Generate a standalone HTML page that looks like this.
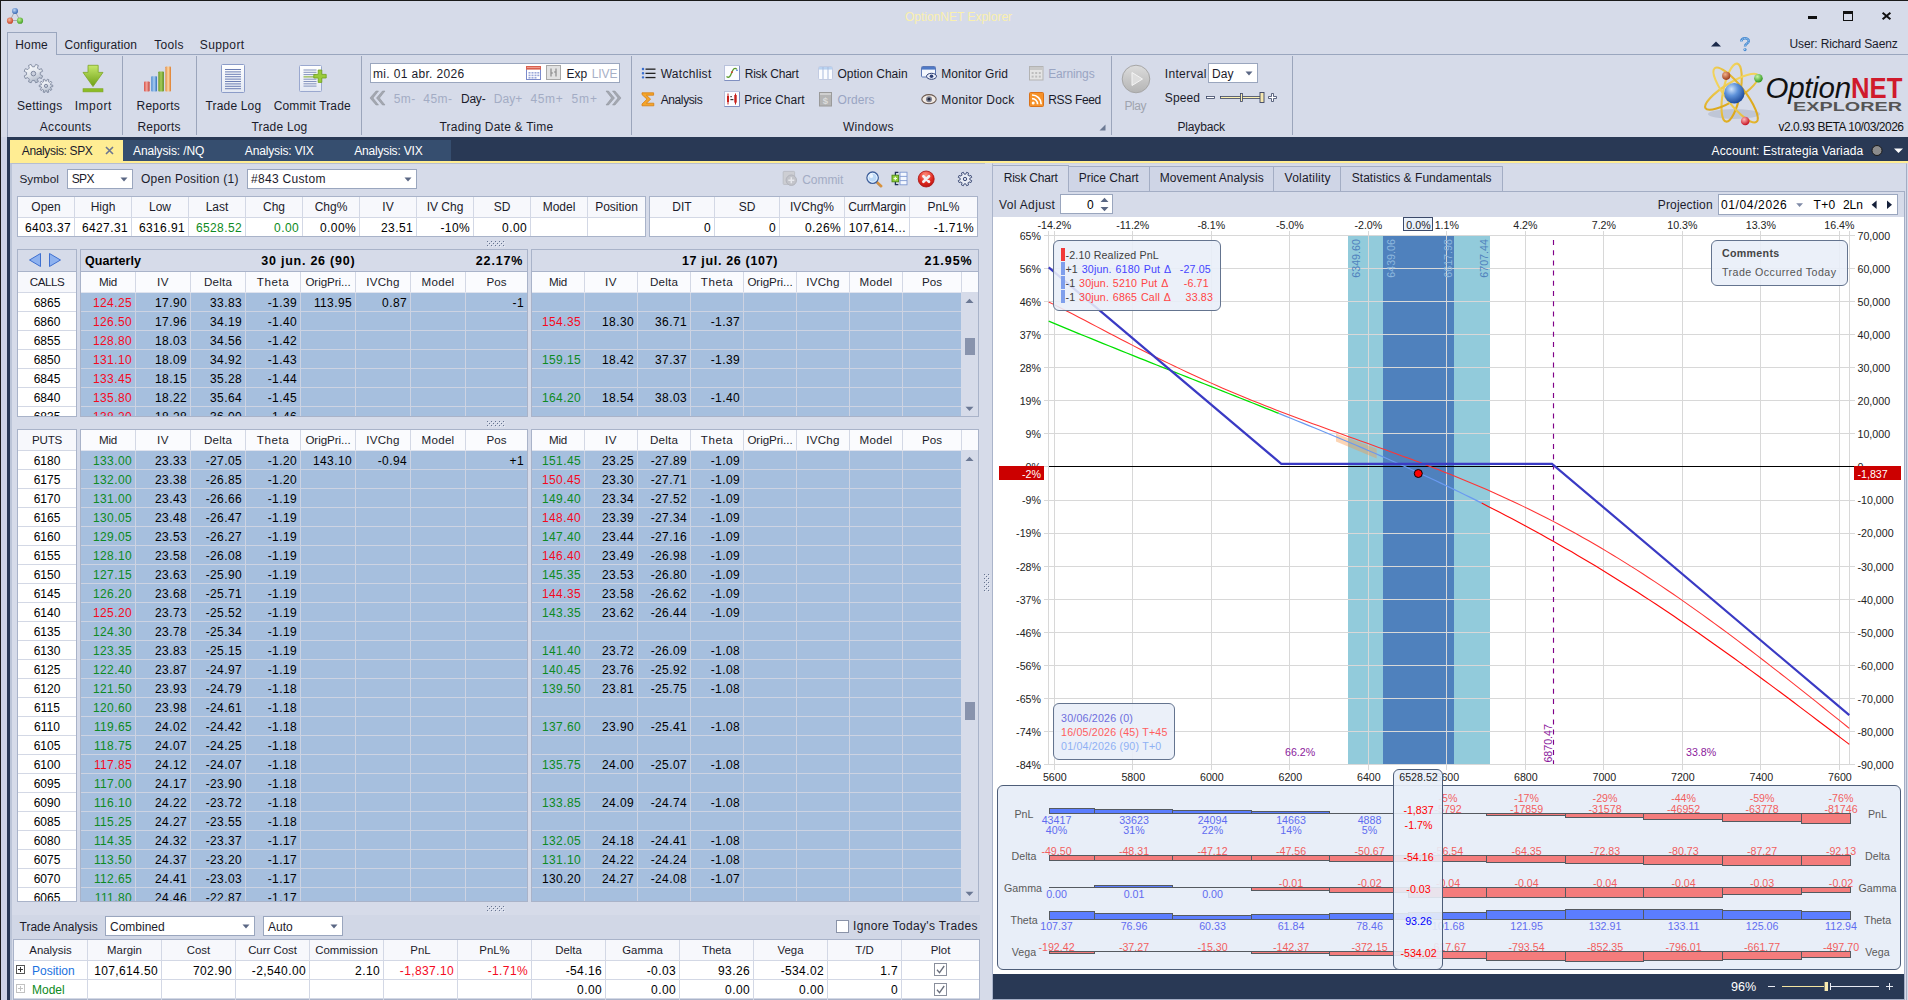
<!DOCTYPE html>
<html><head><meta charset="utf-8"><title>OptionNET Explorer</title>
<style>
html,body{margin:0;padding:0;overflow:hidden;}
body{width:1908px;height:1000px;overflow:hidden;position:relative;background:#d6dbe9;font-family:"Liberation Sans",sans-serif;font-size:12px;color:#1b1b2b;}
div{position:absolute;box-sizing:border-box;}
.t{white-space:nowrap;}
.n{white-space:nowrap;font-size:12px;letter-spacing:0.38px;color:#000;}
.c{white-space:nowrap;font-size:10.67px;}
svg{position:absolute;overflow:visible;}
.hd{background:#f7f8fc;}
.g{color:#0d8a22;}
.r{color:#f40a1e;}
</style></head><body>

<div style="left:0px;top:0px;width:1908px;height:1px;background:#1a1a1a;"></div>
<div style="left:0px;top:0px;width:1px;height:1000px;background:#1a1a1a;"></div>
<div style="left:1px;top:137px;width:6px;height:863px;background:#ced4e6;"></div>
<svg style="left:6px;top:7px" width="18" height="18" viewBox="0 0 18 18">
<defs>
<radialGradient id="gb" cx="40%" cy="35%" r="70%"><stop offset="0" stop-color="#bcd6f5"/><stop offset="1" stop-color="#2c5fb0"/></radialGradient>
<radialGradient id="gr" cx="40%" cy="35%" r="70%"><stop offset="0" stop-color="#f6b59a"/><stop offset="1" stop-color="#c4381a"/></radialGradient>
<radialGradient id="gg" cx="40%" cy="35%" r="70%"><stop offset="0" stop-color="#b9ee8e"/><stop offset="1" stop-color="#3c9a1c"/></radialGradient>
</defs>
<path d="M9 4 L4 13.5 L14 13.5 Z" fill="none" stroke="#8f8f96" stroke-width="0.7"/>
<circle cx="9" cy="4" r="3" fill="url(#gb)"/><circle cx="4" cy="13.7" r="3.1" fill="url(#gr)"/><circle cx="14" cy="13.7" r="3.1" fill="url(#gg)"/></svg>
<div class="t" style="left:858.5px;width:200px;text-align:center;top:9.0px;line-height:16px;height:16px;color:#faf0ae;font-size:12px;">OptionNET Explorer</div>
<div style="left:1808px;top:16px;width:9px;height:3px;background:#111;"></div>
<div style="left:1843px;top:11px;width:10px;height:10px;border:1px solid #111;border-top:3px solid #111;"></div>
<svg style="left:1881px;top:11px" width="11" height="10"><path d="M1.6 1.7 L9.4 8.3 M9.4 1.7 L1.6 8.3" stroke="#111" stroke-width="2"/></svg>
<div style="left:7px;top:32px;width:50px;height:23px;border:1px solid #9aa6be;border-bottom:none;background:#d6dbe9;z-index:2;"></div>
<div style="left:7px;top:54px;width:1901px;height:1px;background:#9aa6be;"></div>
<div style="left:8px;top:54px;width:48px;height:1px;background:#d6dbe9;z-index:3;"></div>
<div class="t" style="left:15.3px;top:36.5px;line-height:16px;height:16px;font-size:12px;letter-spacing:0.12px;z-index:4;">Home</div>
<div class="t" style="left:64.5px;top:36.5px;line-height:16px;height:16px;font-size:12px;letter-spacing:0.09px;">Configuration</div>
<div class="t" style="left:154.2px;top:36.5px;line-height:16px;height:16px;font-size:12px;letter-spacing:0.30px;">Tools</div>
<div class="t" style="left:199.8px;top:36.5px;line-height:16px;height:16px;font-size:12px;letter-spacing:0.38px;">Support</div>
<svg style="left:1711px;top:41px" width="10" height="6"><path d="M0 5.5 L5 0.5 L10 5.5 Z" fill="#1b2a4a"/></svg>
<svg style="left:1739px;top:37px" width="12" height="15" viewBox="0 0 12 15"><path d="M2.3 4.4 C2.3 0.4 9.8 0.4 9.8 4 C9.8 6.6 6 6.4 6 9.4" fill="none" stroke="#4a8bd0" stroke-width="2.5"/><path d="M2.3 4.4 C2.3 0.4 9.8 0.4 9.8 4 C9.8 6.6 6 6.4 6 9.4" fill="none" stroke="#a9d2f5" stroke-width="1" stroke-dasharray="1.2 1"/><circle cx="6" cy="12.6" r="1.6" fill="#4a8bd0"/><circle cx="5.7" cy="12.2" r="0.7" fill="#b9dcf8"/></svg>
<div class="t" style="left:1789.5px;top:35.6px;line-height:16px;height:16px;font-size:12px;letter-spacing:-0.14px;">User: Richard Saenz</div>
<div style="left:7px;top:55px;width:1px;height:82px;background:#9aa6be;"></div>
<div style="left:122px;top:56px;width:1px;height:79px;background:#9ba5bb;"></div>
<div style="left:196px;top:56px;width:1px;height:79px;background:#9ba5bb;"></div>
<div style="left:361px;top:56px;width:1px;height:79px;background:#9ba5bb;"></div>
<div style="left:631px;top:56px;width:1px;height:79px;background:#9ba5bb;"></div>
<div style="left:1111px;top:56px;width:1px;height:79px;background:#9ba5bb;"></div>
<div style="left:1292px;top:56px;width:1px;height:79px;background:#9ba5bb;"></div>
<div class="t" style="left:39.8px;top:119.0px;line-height:16px;height:16px;font-size:12px;letter-spacing:0.29px;">Accounts</div>
<div class="t" style="left:137.5px;top:119.0px;line-height:16px;height:16px;font-size:12px;letter-spacing:0.17px;">Reports</div>
<div class="t" style="left:251.5px;top:119.0px;line-height:16px;height:16px;font-size:12px;letter-spacing:0.19px;">Trade Log</div>
<div class="t" style="left:439.5px;top:119.0px;line-height:16px;height:16px;font-size:12px;letter-spacing:0.22px;">Trading Date &amp; Time</div>
<div class="t" style="left:842.9px;top:119.0px;line-height:16px;height:16px;font-size:12px;letter-spacing:0.32px;">Windows</div>
<div class="t" style="left:1177.5px;top:119.0px;line-height:16px;height:16px;font-size:12px;letter-spacing:-0.16px;">Playback</div>
<div class="t" style="left:16.9px;top:98.0px;line-height:16px;height:16px;font-size:12px;letter-spacing:0.28px;">Settings</div>
<div class="t" style="left:74.7px;top:98.0px;line-height:16px;height:16px;font-size:12px;letter-spacing:0.53px;">Import</div>
<div class="t" style="left:136.5px;top:98.0px;line-height:16px;height:16px;font-size:12px;letter-spacing:0.21px;">Reports</div>
<div class="t" style="left:205.5px;top:98.0px;line-height:16px;height:16px;font-size:12px;letter-spacing:0.17px;">Trade Log</div>
<div class="t" style="left:273.7px;top:98.0px;line-height:16px;height:16px;font-size:12px;letter-spacing:0.15px;">Commit Trade</div>
<svg style="left:0;top:0" width="130" height="100"><defs><linearGradient id="gm" x1="0" y1="0" x2="0.4" y2="1"><stop offset="0" stop-color="#ffffff"/><stop offset="0.55" stop-color="#e4e8ef"/><stop offset="1" stop-color="#b4bdcc"/></linearGradient></defs><polygon points="40.22,74.68 42.62,75.89 41.54,78.50 38.98,77.66 37.46,79.18 38.30,81.74 35.69,82.82 34.48,80.42 32.32,80.42 31.11,82.82 28.50,81.74 29.34,79.18 27.82,77.66 25.26,78.50 24.18,75.89 26.58,74.68 26.58,72.52 24.18,71.31 25.26,68.70 27.82,69.54 29.34,68.02 28.50,65.46 31.11,64.38 32.32,66.78 34.48,66.78 35.69,64.38 38.30,65.46 37.46,68.02 38.98,69.54 41.54,68.70 42.62,71.31 40.22,72.52" fill="url(#gm)" stroke="#7e889e" stroke-width="0.9" stroke-linejoin="round"/><circle cx="33.4" cy="73.6" r="2.3" fill="#c9cfdd" stroke="#7e889e" stroke-width="1"/><polygon points="50.81,84.98 52.75,85.09 52.75,86.71 50.81,86.82 50.43,87.99 51.94,89.21 50.99,90.52 49.35,89.47 48.36,90.19 48.86,92.07 47.32,92.57 46.61,90.76 45.39,90.76 44.68,92.57 43.14,92.07 43.64,90.19 42.65,89.47 41.01,90.52 40.06,89.21 41.57,87.99 41.19,86.82 39.25,86.71 39.25,85.09 41.19,84.98 41.57,83.81 40.06,82.59 41.01,81.28 42.65,82.33 43.64,81.61 43.14,79.73 44.68,79.23 45.39,81.04 46.61,81.04 47.32,79.23 48.86,79.73 48.36,81.61 49.35,82.33 50.99,81.28 51.94,82.59 50.43,83.81" fill="url(#gm)" stroke="#7e889e" stroke-width="0.9" stroke-linejoin="round"/><circle cx="46" cy="85.9" r="1.6" fill="#c9cfdd" stroke="#7e889e" stroke-width="1"/></svg>
<svg style="left:80px;top:62px" width="26" height="32" viewBox="0 0 26 32"><defs><linearGradient id="gi" x1="0" y1="0" x2="0" y2="1"><stop offset="0" stop-color="#c6e86b"/><stop offset="1" stop-color="#6c9f14"/></linearGradient></defs>
<path d="M8 3.3 H18.2 V10.4 H23 L13 24.6 L3 10.4 H8 Z" fill="url(#gi)" stroke="#7ea626" stroke-width="0.8"/>
<rect x="3" y="26.7" width="20" height="3.2" fill="#8cbc24" stroke="#7ea626" stroke-width="0.6"/></svg>
<svg style="left:142px;top:64px" width="32" height="30" viewBox="0 0 32 30">
<defs>
<linearGradient id="r1" x1="0" x2="1"><stop offset="0" stop-color="#d9534a"/><stop offset=".5" stop-color="#f3a59c"/><stop offset="1" stop-color="#c23a30"/></linearGradient>
<linearGradient id="r2" x1="0" x2="1"><stop offset="0" stop-color="#4a88d0"/><stop offset=".5" stop-color="#a9cdf2"/><stop offset="1" stop-color="#3270bd"/></linearGradient>
<linearGradient id="r3" x1="0" x2="1"><stop offset="0" stop-color="#6c9a28"/><stop offset=".5" stop-color="#a6cc5c"/><stop offset="1" stop-color="#5a8a1c"/></linearGradient>
<linearGradient id="r4" x1="0" x2="1"><stop offset="0" stop-color="#e58a3a"/><stop offset=".5" stop-color="#fbd7a8"/><stop offset="1" stop-color="#dd7a28"/></linearGradient>
</defs>
<rect x="2" y="17.4" width="5.6" height="10.2" rx="0.8" fill="url(#r1)"/>
<rect x="9.2" y="12.3" width="5.8" height="15.3" rx="0.8" fill="url(#r2)"/>
<rect x="16.3" y="7.4" width="5.6" height="20.2" rx="0.8" fill="url(#r3)"/>
<rect x="23.4" y="2.4" width="5.6" height="25.2" rx="0.8" fill="url(#r4)"/></svg>
<svg style="left:221px;top:64px" width="24" height="29" viewBox="0 0 24 29"><defs><linearGradient id="gd" x1="0" y1="0" x2="0" y2="1"><stop offset="0" stop-color="#ffffff"/><stop offset="1" stop-color="#e3e8f3"/></linearGradient></defs>
<rect x="0.5" y="0.5" width="23" height="28" rx="1" fill="url(#gd)" stroke="#8c9cc8"/><rect x="4" y="5.0" width="16" height="1" fill="#6b7db3"/><rect x="4" y="7.4" width="16" height="1" fill="#6b7db3"/><rect x="4" y="9.8" width="16" height="1" fill="#6b7db3"/><rect x="4" y="12.2" width="16" height="1" fill="#6b7db3"/><rect x="4" y="14.6" width="16" height="1" fill="#6b7db3"/><rect x="4" y="17.0" width="16" height="1" fill="#6b7db3"/><rect x="4" y="19.4" width="16" height="1" fill="#6b7db3"/><rect x="4" y="21.8" width="16" height="1" fill="#6b7db3"/><rect x="4" y="24.2" width="16" height="1" fill="#6b7db3"/></svg>
<svg style="left:299px;top:65px" width="30" height="28" viewBox="0 0 30 28">
<rect x="0.5" y="0.5" width="22" height="26" rx="1" fill="url(#gd)" stroke="#9aa8cf"/><rect x="4.5" y="4.5" width="13" height="1" fill="#8493bd"/><rect x="4.5" y="6.8" width="13" height="1" fill="#8493bd"/><rect x="4.5" y="9.1" width="13" height="1" fill="#8493bd"/><rect x="4.5" y="11.4" width="13" height="1" fill="#7aa822"/><rect x="4.5" y="13.7" width="13" height="1" fill="#8493bd"/><rect x="4.5" y="16.0" width="13" height="1" fill="#8493bd"/><rect x="4.5" y="18.3" width="13" height="1" fill="#8493bd"/><rect x="4.5" y="20.6" width="13" height="1" fill="#8493bd"/>
<path d="M19.2 5 h3.6 v4.4 h4.4 v3.6 h-4.4 v4.4 h-3.6 v-4.4 h-4.4 v-3.6 h4.4 Z" fill="#9acb3a" stroke="#6e9f1b" stroke-width="0.8"/></svg>
<div style="left:370px;top:63px;width:250px;height:20px;background:#fff;border:1px solid #9aa6be;"></div>
<div class="t" style="left:373.0px;top:66.0px;line-height:16px;height:16px;font-size:12px;letter-spacing:0.34px;">mi. 01 abr. 2026</div>
<svg style="left:526px;top:65px" width="16" height="16"><rect x="0.5" y="1.5" width="14" height="13" fill="#fff" stroke="#7b8acb"/><rect x="0" y="1" width="15" height="3.6" fill="#d9604e"/><rect x="1" y="2" width="13" height="1" fill="#ee9a8c"/>
<g fill="#9aa7d9"><rect x="2.5" y="7" width="2" height="1.6"/><rect x="5.5" y="7" width="2" height="1.6"/><rect x="8.5" y="7" width="2" height="1.6"/><rect x="11.3" y="7" width="2" height="1.6"/><rect x="2.5" y="9.6" width="2" height="1.6"/><rect x="5.5" y="9.6" width="2" height="1.6"/><rect x="8.5" y="9.6" width="2" height="1.6"/><rect x="11.3" y="9.6" width="2" height="1.6"/><rect x="2.5" y="12" width="2" height="1.6"/><rect x="5.5" y="12" width="2" height="1.6"/><rect x="8.5" y="12" width="2" height="1.6"/></g></svg>
<svg style="left:546px;top:65px" width="16" height="16"><rect x="0.5" y="0.5" width="14" height="14" fill="#e2e2e2" stroke="#a8a8a8"/><path d="M5 3.5 V11.5 M10 3.5 V11.5 M5 8 H7 M8 7 H10" stroke="#8a8a8a" stroke-width="1.2" fill="none"/></svg>
<div class="t" style="left:566.5px;top:66.0px;line-height:16px;height:16px;font-size:12px;letter-spacing:-0.03px;">Exp</div>
<div class="t" style="left:591.8px;top:66.0px;line-height:16px;height:16px;font-size:12px;letter-spacing:-0.13px;color:#a7b0c6;">LIVE</div>
<svg style="left:368px;top:90px" width="18" height="16"><path d="M8 1 L2 8 L8 15 L10.5 15 L5 8 L10.5 1 Z M14.5 1 L8.5 8 L14.5 15 L17 15 L11.5 8 L17 1 Z" fill="#a3a7b0" stroke="#8d9198" stroke-width="0.5"/></svg>
<svg style="left:605px;top:90px" width="18" height="16"><path d="M8 1 L2 8 L8 15 L10.5 15 L5 8 L10.5 1 Z M14.5 1 L8.5 8 L14.5 15 L17 15 L11.5 8 L17 1 Z" transform="translate(18,0) scale(-1,1)" fill="#a3a7b0" stroke="#8d9198" stroke-width="0.5"/></svg>
<div class="t" style="left:393.8px;top:91.0px;line-height:16px;height:16px;font-size:12px;letter-spacing:0.35px;color:#a3acc4;">5m-</div>
<div class="t" style="left:423.3px;top:91.0px;line-height:16px;height:16px;font-size:12px;letter-spacing:0.47px;color:#a3acc4;">45m-</div>
<div class="t" style="left:460.9px;top:91.0px;line-height:16px;height:16px;font-size:12px;letter-spacing:-0.18px;color:#1b1b2b;">Day-</div>
<div class="t" style="left:493.8px;top:91.0px;line-height:16px;height:16px;font-size:12px;letter-spacing:0.04px;color:#a3acc4;">Day+</div>
<div class="t" style="left:530.4px;top:91.0px;line-height:16px;height:16px;font-size:12px;letter-spacing:0.69px;color:#a3acc4;">45m+</div>
<div class="t" style="left:571.5px;top:91.0px;line-height:16px;height:16px;font-size:12px;letter-spacing:0.87px;color:#a3acc4;">5m+</div>
<div class="t" style="left:660.7px;top:65.5px;line-height:16px;height:16px;font-size:12px;letter-spacing:0.29px;color:#1b1b2b;">Watchlist</div>
<div class="t" style="left:660.7px;top:91.5px;line-height:16px;height:16px;font-size:12px;letter-spacing:-0.39px;color:#1b1b2b;">Analysis</div>
<div class="t" style="left:744.7px;top:65.5px;line-height:16px;height:16px;font-size:12px;letter-spacing:-0.22px;color:#1b1b2b;">Risk Chart</div>
<div class="t" style="left:744.2px;top:91.5px;line-height:16px;height:16px;font-size:12px;letter-spacing:0.04px;color:#1b1b2b;">Price Chart</div>
<div class="t" style="left:837.5px;top:65.5px;line-height:16px;height:16px;font-size:12px;letter-spacing:0.01px;color:#1b1b2b;">Option Chain</div>
<div class="t" style="left:837.5px;top:91.5px;line-height:16px;height:16px;font-size:12px;letter-spacing:0.05px;color:#9aa5c3;">Orders</div>
<div class="t" style="left:941.3px;top:65.5px;line-height:16px;height:16px;font-size:12px;letter-spacing:0.05px;color:#1b1b2b;">Monitor Grid</div>
<div class="t" style="left:941.3px;top:91.5px;line-height:16px;height:16px;font-size:12px;letter-spacing:0.21px;color:#1b1b2b;">Monitor Dock</div>
<div class="t" style="left:1048.2px;top:65.5px;line-height:16px;height:16px;font-size:12px;letter-spacing:-0.13px;color:#9aa5c3;">Earnings</div>
<div class="t" style="left:1048.2px;top:91.5px;line-height:16px;height:16px;font-size:12px;letter-spacing:-0.33px;color:#1b1b2b;">RSS Feed</div>
<svg style="left:641px;top:67px" width="16" height="13"><g fill="#222"><rect x="4.5" y="1.5" width="10" height="1.3"/><rect x="4.5" y="5.7" width="10" height="1.3"/><rect x="4.5" y="9.9" width="10" height="1.3"/></g><g fill="#3b6fd0"><rect x="0.8" y="0.8" width="2.4" height="2.4" rx="1"/><rect x="0.8" y="5" width="2.4" height="2.4" rx="1"/><rect x="0.8" y="9.2" width="2.4" height="2.4" rx="1"/></g></svg>
<svg style="left:641px;top:92px" width="15" height="15"><path d="M1 0.8 H12.6 V3.2 H5.4 L9.6 7.2 L5.4 11.2 H12.8 V13.8 H1 V12 L6 7.2 L1 2.6 Z" fill="#f5a52a" stroke="#d57e12" stroke-width="0.8" stroke-linejoin="round"/></svg>
<svg style="left:724px;top:65px" width="17" height="17"><rect x="0.5" y="0.5" width="15" height="15" fill="#fbfcff" stroke="#b9c2dc"/><path d="M0.5 15.5 H15.5 V1" stroke="#7f8fc0" fill="none"/><path d="M2.5 11.5 C5 13.5 6.3 11.5 7.6 8" stroke="#5a9a2a" stroke-width="1.3" fill="none"/><path d="M7.6 8 C9 3.6 10.8 2.2 12.8 4.2" stroke="#5a9a2a" stroke-width="1.3" fill="none"/><circle cx="7.9" cy="7.2" r="0.9" fill="#d33"/><circle cx="13" cy="5.2" r="0.8" fill="#36c"/></svg>
<svg style="left:724px;top:91px" width="17" height="17"><rect x="0.5" y="0.5" width="15" height="15" fill="#fbfcff" stroke="#b9c2dc"/><path d="M0.5 15.5 H15.5 V1" stroke="#7f8fc0" fill="none"/><g stroke="#c8201c" fill="#c8201c"><path d="M4 2.5 V13.5" stroke-width="1"/><rect x="3" y="5" width="2" height="6" stroke="none"/><path d="M11.5 2.5 V13.5" stroke-width="1"/><rect x="10.3" y="4" width="2.4" height="7.6" stroke="none"/></g><g fill="#333"><rect x="6.4" y="5" width="1.4" height="1.2"/><rect x="6.4" y="8" width="3" height="1.2"/></g></svg>
<svg style="left:818px;top:66px" width="16" height="15"><rect x="0.5" y="0.5" width="14" height="13" rx="1.2" fill="#fbfcff" stroke="#c2cbe2"/><rect x="1" y="1" width="13" height="2.6" fill="#b9d2f0"/><path d="M5 1 V13 M10 1 V13" stroke="#a9bbdd"/></svg>
<svg style="left:819px;top:92px" width="14" height="15"><rect x="0.5" y="0.5" width="12" height="13.5" fill="#b5b5b5" stroke="#9a9a9a"/><rect x="1" y="1" width="11" height="2" fill="#cfcfcf"/><text x="6.5" y="11.6" font-size="9.5" font-weight="bold" text-anchor="middle" fill="#dcdcdc" font-family="Liberation Sans">$</text></svg>
<svg style="left:921px;top:66px" width="17" height="15"><rect x="0.5" y="0.5" width="14" height="10.5" rx="1" fill="#f4f7fd" stroke="#5d78b5"/><rect x="1" y="1" width="13" height="2.6" fill="#4f79c6"/><ellipse cx="10.5" cy="10.3" rx="5" ry="3" fill="#e9eefa" stroke="#2e3f74" stroke-width="1"/><circle cx="10.5" cy="10.3" r="1.8" fill="#2e3f74"/></svg>
<svg style="left:921px;top:93px" width="17" height="13"><ellipse cx="8" cy="6.2" rx="7.2" ry="4.6" fill="#f1e9e2" stroke="#6b5a52" stroke-width="1.1"/><circle cx="8" cy="6.2" r="3" fill="#7a7f92"/><circle cx="8" cy="6.2" r="1.4" fill="#23273a"/></svg>
<svg style="left:1029px;top:66px" width="15" height="15"><rect x="0.5" y="0.5" width="13.5" height="13.5" fill="#e4e4e4" stroke="#b3b3b3"/><rect x="1" y="1" width="12.5" height="3" fill="#c8c8c8"/><g fill="#bdbdbd"><rect x="2.6" y="6" width="2" height="2"/><rect x="6.2" y="6" width="2" height="2"/><rect x="9.8" y="6" width="2" height="2"/><rect x="2.6" y="9.6" width="2" height="2"/><rect x="6.2" y="9.6" width="2" height="2"/><rect x="9.8" y="9.6" width="2" height="2"/></g></svg>
<svg style="left:1029px;top:92px" width="15" height="15"><rect x="0.5" y="0.5" width="14" height="14" rx="1" fill="#f6922a" stroke="#d9721a"/><circle cx="4.2" cy="11" r="1.5" fill="#fff"/><path d="M3 6.6 A5.6 5.6 0 0 1 8.6 12.2 M3 3 A9.2 9.2 0 0 1 12.2 12.2" stroke="#fff" stroke-width="1.7" fill="none"/></svg>
<svg style="left:1099px;top:124px" width="7" height="7"><path d="M6.5 0.5 V6.5 H0.5 Z" fill="#6d7a94"/></svg>
<svg style="left:1121px;top:64px" width="30" height="30"><defs><linearGradient id="gp" x1="0" y1="0" x2="0" y2="1"><stop offset="0" stop-color="#dcdcdc"/><stop offset="1" stop-color="#b4b4b4"/></linearGradient></defs><circle cx="15" cy="15" r="13.8" fill="url(#gp)" stroke="#a6a6a6"/><path d="M11 8.5 L21.5 15 L11 21.5 Z" fill="#dedede" stroke="#f4f4f4" stroke-width="1"/></svg>
<div class="t" style="left:1124.5px;top:98.0px;line-height:16px;height:16px;font-size:12px;letter-spacing:-0.44px;color:#a0a4ae;">Play</div>
<div class="t" style="left:1164.8px;top:65.5px;line-height:16px;height:16px;font-size:12px;letter-spacing:0.32px;">Interval</div>
<div style="left:1208px;top:63px;width:50px;height:20px;background:#fff;border:1px solid #9aa6be;"></div>
<div class="t" style="left:1212.1px;top:65.8px;line-height:16px;height:16px;font-size:12px;letter-spacing:0.02px;">Day</div>
<svg style="left:1245px;top:71px" width="8" height="5"><path d="M0.5 0.5 H7.5 L4 4.5 Z" fill="#5a6784"/></svg>
<div class="t" style="left:1164.8px;top:90.3px;line-height:16px;height:16px;font-size:12px;letter-spacing:0.10px;">Speed</div>
<svg style="left:1204px;top:91px" width="78" height="14"><rect x="2.5" y="5.5" width="8" height="2" fill="#fff" stroke="#3a4463" stroke-width="0.8"/><rect x="16.5" y="5.5" width="42" height="2" fill="#fbefb0" stroke="#3a4463" stroke-width="0.8"/><rect x="36.5" y="2.5" width="2" height="8" fill="#fbefb0" stroke="#3a4463" stroke-width="0.8"/><rect x="56" y="1.5" width="4" height="10" fill="#f6e7b0" stroke="#3a4463" stroke-width="0.9"/><path d="M69.5 2.5 v3 h3 v2 h-3 v3 h-2 v-3 h-3 v-2 h3 v-3 Z" fill="#fff" stroke="#3a4463" stroke-width="0.8"/></svg>
<svg style="left:1696px;top:56px" width="80" height="80" viewBox="0 0 80 80">
<defs><radialGradient id="lb" cx="36%" cy="30%" r="72%"><stop offset="0" stop-color="#cfe3fb"/><stop offset=".45" stop-color="#5f93da"/><stop offset="1" stop-color="#1d4a9a"/></radialGradient>
<radialGradient id="lr" cx="38%" cy="32%" r="70%"><stop offset="0" stop-color="#ffb8b8"/><stop offset="1" stop-color="#c40c1c"/></radialGradient>
<radialGradient id="lg" cx="38%" cy="32%" r="70%"><stop offset="0" stop-color="#c8f6a6"/><stop offset="1" stop-color="#2a961a"/></radialGradient>
<radialGradient id="lo" cx="38%" cy="32%" r="70%"><stop offset="0" stop-color="#f2b08a"/><stop offset="1" stop-color="#9c3a18"/></radialGradient>
<linearGradient id="ly" x1="0" y1="0" x2="1" y2="1"><stop offset="0" stop-color="#f6dc6a"/><stop offset="1" stop-color="#d8a010"/></linearGradient></defs>
<ellipse cx="38" cy="58" rx="26" ry="5" fill="#9aa3b8" opacity=".38"/>
<g fill="none" stroke="url(#ly)" stroke-width="2.1">
<ellipse cx="35.6" cy="36.6" rx="8.6" ry="29.5" transform="rotate(11 35.6 36.6)"/>
<ellipse cx="35.8" cy="35.8" rx="8.6" ry="31" transform="rotate(58 35.8 35.8)"/>
<ellipse cx="39.6" cy="39" rx="9.4" ry="34" transform="rotate(-38 39.6 39)"/>
</g>
<circle cx="38.3" cy="37.2" r="10.2" fill="url(#lb)"/>
<circle cx="30.2" cy="19.8" r="4.1" fill="url(#lo)"/>
<circle cx="62.4" cy="22.2" r="4.3" fill="url(#lg)"/>
<circle cx="49.2" cy="65" r="4.3" fill="url(#lr)"/>
</svg>
<div class="t" style="left:1765.5px;top:70.5px;line-height:34px;height:34px;font-size:29.5px;"><span style="font-style:italic;color:#111;letter-spacing:-0.25px">Option</span><span style="display:inline-block;position:relative;color:#d01a2c;font-weight:bold;transform:scaleX(0.87);transform-origin:0 50%;">NET</span></div>
<div class="t" style="left:1793.2px;top:100.3px;line-height:14px;height:14px;font-size:12.4px;font-weight:bold;color:#555;transform:scaleX(1.6);transform-origin:0 50%;">EXPLORER</div>
<div class="t" style="left:1778.5px;top:119.0px;line-height:16px;height:16px;font-size:12px;letter-spacing:-0.47px;color:#111;">v2.0.93 BETA 10/03/2026</div>
<div style="left:7px;top:137px;width:1901px;height:24px;background:#293955;"></div>
<div style="left:7px;top:161px;width:3px;height:839px;background:#293955;"></div>
<div style="left:10px;top:161px;width:1898px;height:2px;background:#ffed93;"></div>
<div style="left:10px;top:140px;width:113px;height:21px;background:#ffed93;"></div>
<div class="t" style="left:21.8px;top:142.5px;line-height:16px;height:16px;font-size:12px;letter-spacing:-0.36px;color:#1b1b2b;">Analysis: SPX</div>
<svg style="left:105px;top:146px" width="9" height="9"><path d="M1 1 L8 8 M8 1 L1 8" stroke="#6b7590" stroke-width="1.6"/></svg>
<div style="left:123px;top:140px;width:328px;height:21px;background:#364e6f;"></div>
<div class="t" style="left:133.0px;top:142.5px;line-height:16px;height:16px;font-size:12px;letter-spacing:-0.11px;color:#fff;">Analysis: /NQ</div>
<div class="t" style="left:244.8px;top:142.5px;line-height:16px;height:16px;font-size:12px;letter-spacing:-0.15px;color:#fff;">Analysis: VIX</div>
<div class="t" style="left:354.2px;top:142.5px;line-height:16px;height:16px;font-size:12px;letter-spacing:-0.18px;color:#fff;">Analysis: VIX</div>
<div class="t" style="left:1711.5px;top:142.5px;line-height:16px;height:16px;font-size:12px;letter-spacing:0.15px;color:#fff;">Account: Estrategia Variada</div>
<svg style="left:1871px;top:144px" width="12" height="12"><circle cx="6" cy="6.5" r="5" fill="#8c8c8c" stroke="#1c1c1c" stroke-width="1"/></svg>
<svg style="left:1894px;top:148px" width="9" height="6"><path d="M0 0.5 H9 L4.5 5 Z" fill="#fff"/></svg>
<div style="left:10px;top:163px;width:976px;height:837px;background:#d6dbe9;border-left:2px solid #bcc5d8;border-top:1px solid #b6bed1;"></div>
<div style="left:985px;top:163px;width:8px;height:837px;background:#d6dbe9;"></div>
<div class="t" style="left:19.5px;top:170.8px;line-height:16px;height:16px;font-size:11.8px;">Symbol</div>
<div style="left:67px;top:169px;width:66px;height:20px;background:#fff;border:1px solid #9aa6be;"></div>
<div class="t" style="left:71.8px;top:171.3px;line-height:16px;height:16px;font-size:12px;letter-spacing:-0.70px;">SPX</div>
<svg style="left:120px;top:177px" width="8" height="5"><path d="M0.5 0.5 H7.5 L4 4.5 Z" fill="#5a6784"/></svg>
<div class="t" style="left:141px;top:170.8px;line-height:16px;height:16px;font-size:12px;letter-spacing:0.25px;">Open Position (1)</div>
<div style="left:247px;top:169px;width:170px;height:20px;background:#fff;border:1px solid #9aa6be;"></div>
<div class="t" style="left:251px;top:171.3px;line-height:16px;height:16px;font-size:12px;letter-spacing:0.3px;">#843 Custom</div>
<svg style="left:404px;top:177px" width="8" height="5"><path d="M0.5 0.5 H7.5 L4 4.5 Z" fill="#5a6784"/></svg>
<svg style="left:782px;top:170px" width="18" height="18"><rect x="1.2" y="1.4" width="11.4" height="13" rx="0.8" fill="#cdced3" stroke="#bdbfc6"/><circle cx="9.3" cy="10.2" r="5.2" fill="#c3c4ca" stroke="#b2b4bc"/><path d="M9.3 7.2 v6 M6.3 10.2 h6" stroke="#e6e7ec" stroke-width="1.5"/></svg>
<div class="t" style="left:802.2px;top:171.6px;line-height:16px;height:16px;font-size:12px;letter-spacing:-0.04px;color:#a3acc4;">Commit</div>
<svg style="left:865px;top:170px" width="19" height="19"><path d="M12 12 L16.3 16.2" stroke="#d9923c" stroke-width="2.4" stroke-linecap="round"/><path d="M12 12 L16.3 16.2" stroke="#8a5a20" stroke-width="0.5" stroke-linecap="round" transform="translate(-0.9,0.9)"/><circle cx="7.6" cy="7.7" r="5.7" fill="#bcd9f7" stroke="#3f5f9a" stroke-width="1.3"/><circle cx="7.6" cy="7.7" r="4.4" fill="none" stroke="#e8f3ff" stroke-width="1"/><circle cx="6.2" cy="6" r="2" fill="#f2f8ff" opacity=".9"/></svg>
<svg style="left:891px;top:171px" width="18" height="16"><path d="M7.4 1.4 H4.4 V13.6 H7.4" stroke="#1f2d5a" stroke-width="1.3" fill="none"/><rect x="9" y="1.2" width="7" height="12.6" fill="#f4f8ff" stroke="#7f98d0" stroke-width="0.9"/><path d="M9 5.4 H16 M9 9.6 H16" stroke="#7f98d0" stroke-width="0.9"/><rect x="1" y="4.2" width="6.6" height="6.6" fill="#8ccb38" stroke="#4e8a14" stroke-width="0.9"/><path d="M4.3 5.8 v3.4 M2.6 7.5 h3.4" stroke="#f4ffe0" stroke-width="1.2"/></svg>
<svg style="left:917px;top:170px" width="19" height="19"><defs><radialGradient id="rx" cx="45%" cy="25%" r="80%"><stop offset="0" stop-color="#ff8f7e"/><stop offset=".6" stop-color="#e02a20"/><stop offset="1" stop-color="#b30f0f"/></radialGradient></defs><circle cx="9.2" cy="9" r="8" fill="url(#rx)" stroke="#a81414" stroke-width="0.8"/><path d="M6.4 6.2 L12 11.8 M12 6.2 L6.4 11.8" stroke="#f1f1f4" stroke-width="2.7" stroke-linecap="round"/></svg>
<svg style="left:956px;top:170px" width="18" height="18"><polygon points="13.84,9.77 15.71,10.61 14.88,12.61 12.96,11.88 11.88,12.96 12.61,14.88 10.61,15.71 9.77,13.84 8.23,13.84 7.39,15.71 5.39,14.88 6.12,12.96 5.04,11.88 3.12,12.61 2.29,10.61 4.16,9.77 4.16,8.23 2.29,7.39 3.12,5.39 5.04,6.12 6.12,5.04 5.39,3.12 7.39,2.29 8.23,4.16 9.77,4.16 10.61,2.29 12.61,3.12 11.88,5.04 12.96,6.12 14.88,5.39 15.71,7.39 13.84,8.23" fill="#e9edf5" stroke="#42507a" stroke-width="1" stroke-linejoin="round"/><circle cx="9" cy="9" r="1.7" fill="#d6dbe9" stroke="#42507a" stroke-width="1"/></svg>
<div style="left:17px;top:196px;width:629px;height:41px;background:#fff;border:1px solid #a9b3c9;"></div>
<div style="left:18px;top:197px;width:627px;height:20px;background:#f7f8fc;"></div>
<div style="left:18px;top:217px;width:627px;height:1px;background:#d3d8e5;"></div>
<div style="left:74px;top:197px;width:1px;height:39px;background:#d3d8e5;"></div>
<div style="left:131px;top:197px;width:1px;height:39px;background:#d3d8e5;"></div>
<div style="left:188px;top:197px;width:1px;height:39px;background:#d3d8e5;"></div>
<div style="left:245px;top:197px;width:1px;height:39px;background:#d3d8e5;"></div>
<div style="left:302px;top:197px;width:1px;height:39px;background:#d3d8e5;"></div>
<div style="left:359px;top:197px;width:1px;height:39px;background:#d3d8e5;"></div>
<div style="left:416px;top:197px;width:1px;height:39px;background:#d3d8e5;"></div>
<div style="left:473px;top:197px;width:1px;height:39px;background:#d3d8e5;"></div>
<div style="left:530px;top:197px;width:1px;height:39px;background:#d3d8e5;"></div>
<div style="left:587px;top:197px;width:1px;height:39px;background:#d3d8e5;"></div>
<div class="t" style="left:17.5px;width:57px;text-align:center;top:199.0px;line-height:16px;height:16px;font-size:12px;">Open</div>
<div class="t" style="left:74.5px;width:57px;text-align:center;top:199.0px;line-height:16px;height:16px;font-size:12px;">High</div>
<div class="t" style="left:131.5px;width:57px;text-align:center;top:199.0px;line-height:16px;height:16px;font-size:12px;">Low</div>
<div class="t" style="left:188.5px;width:57px;text-align:center;top:199.0px;line-height:16px;height:16px;font-size:12px;">Last</div>
<div class="t" style="left:245.5px;width:57px;text-align:center;top:199.0px;line-height:16px;height:16px;font-size:12px;">Chg</div>
<div class="t" style="left:302.5px;width:57px;text-align:center;top:199.0px;line-height:16px;height:16px;font-size:12px;">Chg%</div>
<div class="t" style="left:359.5px;width:57px;text-align:center;top:199.0px;line-height:16px;height:16px;font-size:12px;">IV</div>
<div class="t" style="left:416.5px;width:57px;text-align:center;top:199.0px;line-height:16px;height:16px;font-size:12px;">IV Chg</div>
<div class="t" style="left:473.5px;width:57px;text-align:center;top:199.0px;line-height:16px;height:16px;font-size:12px;">SD</div>
<div class="t" style="left:530.5px;width:57px;text-align:center;top:199.0px;line-height:16px;height:16px;font-size:12px;">Model</div>
<div class="t" style="left:587.5px;width:58px;text-align:center;top:199.0px;line-height:16px;height:16px;font-size:12px;">Position</div>
<div class="n " style="left:18px;width:53px;text-align:right;top:220.0px;line-height:16px;height:16px;">6403.37</div>
<div class="n " style="left:75px;width:53px;text-align:right;top:220.0px;line-height:16px;height:16px;">6427.31</div>
<div class="n " style="left:132px;width:53px;text-align:right;top:220.0px;line-height:16px;height:16px;">6316.91</div>
<div class="n g" style="left:189px;width:53px;text-align:right;top:220.0px;line-height:16px;height:16px;">6528.52</div>
<div class="n g" style="left:246px;width:53px;text-align:right;top:220.0px;line-height:16px;height:16px;">0.00</div>
<div class="n " style="left:303px;width:53px;text-align:right;top:220.0px;line-height:16px;height:16px;">0.00%</div>
<div class="n " style="left:360px;width:53px;text-align:right;top:220.0px;line-height:16px;height:16px;">23.51</div>
<div class="n " style="left:417px;width:53px;text-align:right;top:220.0px;line-height:16px;height:16px;">-10%</div>
<div class="n " style="left:474px;width:53px;text-align:right;top:220.0px;line-height:16px;height:16px;">0.00</div>
<div style="left:649px;top:196px;width:329px;height:41px;background:#fff;border:1px solid #a9b3c9;"></div>
<div style="left:650px;top:197px;width:327px;height:20px;background:#f7f8fc;"></div>
<div style="left:650px;top:217px;width:327px;height:1px;background:#d3d8e5;"></div>
<div style="left:714px;top:197px;width:1px;height:39px;background:#d3d8e5;"></div>
<div style="left:779px;top:197px;width:1px;height:39px;background:#d3d8e5;"></div>
<div style="left:844px;top:197px;width:1px;height:39px;background:#d3d8e5;"></div>
<div style="left:909px;top:197px;width:1px;height:39px;background:#d3d8e5;"></div>
<div class="t" style="left:649.5px;width:65px;text-align:center;top:199.0px;line-height:16px;height:16px;font-size:12px;">DIT</div>
<div class="t" style="left:714.5px;width:65px;text-align:center;top:199.0px;line-height:16px;height:16px;font-size:12px;">SD</div>
<div class="t" style="left:779.5px;width:65px;text-align:center;top:199.0px;line-height:16px;height:16px;font-size:12px;">IVChg%</div>
<div class="t" style="left:844.5px;width:65px;text-align:center;top:199.0px;line-height:16px;height:16px;font-size:12px;letter-spacing:-0.27px;">CurrMargin</div>
<div class="t" style="left:909.5px;width:68px;text-align:center;top:199.0px;line-height:16px;height:16px;font-size:12px;">PnL%</div>
<div class="n " style="left:650px;width:61px;text-align:right;top:220.0px;line-height:16px;height:16px;">0</div>
<div class="n " style="left:715px;width:61px;text-align:right;top:220.0px;line-height:16px;height:16px;">0</div>
<div class="n " style="left:780px;width:61px;text-align:right;top:220.0px;line-height:16px;height:16px;">0.26%</div>
<div class="n " style="left:845px;width:61px;text-align:right;top:220.0px;line-height:16px;height:16px;">107,614...</div>
<div class="n " style="left:910px;width:64px;text-align:right;top:220.0px;line-height:16px;height:16px;">-1.71%</div>
<svg style="left:487px;top:241px" width="19" height="7" shape-rendering="crispEdges"><g fill="#e9ecf5"><rect x="1" y="1" width="1" height="1"/><rect x="1" y="5" width="1" height="1"/><rect x="5" y="1" width="1" height="1"/><rect x="5" y="5" width="1" height="1"/><rect x="9" y="1" width="1" height="1"/><rect x="9" y="5" width="1" height="1"/><rect x="13" y="1" width="1" height="1"/><rect x="13" y="5" width="1" height="1"/><rect x="17" y="1" width="1" height="1"/><rect x="17" y="5" width="1" height="1"/><rect x="3" y="3" width="1" height="1"/><rect x="7" y="3" width="1" height="1"/><rect x="11" y="3" width="1" height="1"/><rect x="15" y="3" width="1" height="1"/></g><g fill="#66738f"><rect x="0" y="0" width="1" height="1"/><rect x="0" y="4" width="1" height="1"/><rect x="4" y="0" width="1" height="1"/><rect x="4" y="4" width="1" height="1"/><rect x="8" y="0" width="1" height="1"/><rect x="8" y="4" width="1" height="1"/><rect x="12" y="0" width="1" height="1"/><rect x="12" y="4" width="1" height="1"/><rect x="16" y="0" width="1" height="1"/><rect x="16" y="4" width="1" height="1"/><rect x="2" y="2" width="1" height="1"/><rect x="6" y="2" width="1" height="1"/><rect x="10" y="2" width="1" height="1"/><rect x="14" y="2" width="1" height="1"/></g></svg>
<svg style="left:487px;top:421px" width="19" height="7" shape-rendering="crispEdges"><g fill="#e9ecf5"><rect x="1" y="1" width="1" height="1"/><rect x="1" y="5" width="1" height="1"/><rect x="5" y="1" width="1" height="1"/><rect x="5" y="5" width="1" height="1"/><rect x="9" y="1" width="1" height="1"/><rect x="9" y="5" width="1" height="1"/><rect x="13" y="1" width="1" height="1"/><rect x="13" y="5" width="1" height="1"/><rect x="17" y="1" width="1" height="1"/><rect x="17" y="5" width="1" height="1"/><rect x="3" y="3" width="1" height="1"/><rect x="7" y="3" width="1" height="1"/><rect x="11" y="3" width="1" height="1"/><rect x="15" y="3" width="1" height="1"/></g><g fill="#66738f"><rect x="0" y="0" width="1" height="1"/><rect x="0" y="4" width="1" height="1"/><rect x="4" y="0" width="1" height="1"/><rect x="4" y="4" width="1" height="1"/><rect x="8" y="0" width="1" height="1"/><rect x="8" y="4" width="1" height="1"/><rect x="12" y="0" width="1" height="1"/><rect x="12" y="4" width="1" height="1"/><rect x="16" y="0" width="1" height="1"/><rect x="16" y="4" width="1" height="1"/><rect x="2" y="2" width="1" height="1"/><rect x="6" y="2" width="1" height="1"/><rect x="10" y="2" width="1" height="1"/><rect x="14" y="2" width="1" height="1"/></g></svg>
<svg style="left:487px;top:906px" width="19" height="7" shape-rendering="crispEdges"><g fill="#e9ecf5"><rect x="1" y="1" width="1" height="1"/><rect x="1" y="5" width="1" height="1"/><rect x="5" y="1" width="1" height="1"/><rect x="5" y="5" width="1" height="1"/><rect x="9" y="1" width="1" height="1"/><rect x="9" y="5" width="1" height="1"/><rect x="13" y="1" width="1" height="1"/><rect x="13" y="5" width="1" height="1"/><rect x="17" y="1" width="1" height="1"/><rect x="17" y="5" width="1" height="1"/><rect x="3" y="3" width="1" height="1"/><rect x="7" y="3" width="1" height="1"/><rect x="11" y="3" width="1" height="1"/><rect x="15" y="3" width="1" height="1"/></g><g fill="#66738f"><rect x="0" y="0" width="1" height="1"/><rect x="0" y="4" width="1" height="1"/><rect x="4" y="0" width="1" height="1"/><rect x="4" y="4" width="1" height="1"/><rect x="8" y="0" width="1" height="1"/><rect x="8" y="4" width="1" height="1"/><rect x="12" y="0" width="1" height="1"/><rect x="12" y="4" width="1" height="1"/><rect x="16" y="0" width="1" height="1"/><rect x="16" y="4" width="1" height="1"/><rect x="2" y="2" width="1" height="1"/><rect x="6" y="2" width="1" height="1"/><rect x="10" y="2" width="1" height="1"/><rect x="14" y="2" width="1" height="1"/></g></svg>
<div style="left:17px;top:249px;width:60px;height:23px;background:#d6dbe9;border:1px solid #a9b3c9;border-bottom:none;"></div>
<svg style="left:28px;top:252px" width="36" height="16"><path d="M12.5 1.5 L1.5 8 L12.5 14.5 Z" fill="#8fb2ef" stroke="#3f6fd0" stroke-width="1"/><path d="M21.5 1.5 L32.5 8 L21.5 14.5 Z" fill="#8fb2ef" stroke="#3f6fd0" stroke-width="1"/></svg>
<div style="left:17px;top:271px;width:60px;height:146px;background:#fff;border:1px solid #a9b3c9;overflow:hidden;"><div style="left:0;top:0;width:58px;height:20px;background:#f7f8fc;"></div><div class="t" style="left:0;width:58px;text-align:center;top:2.0px;height:16px;line-height:16px;font-size:11.6px;letter-spacing:-0.45px;">CALLS</div><div style="left:0;top:20px;width:58px;height:1px;background:#d3d8e5;"></div><div style="left:0;top:39px;width:58px;height:1px;background:#d3d8e5;"></div><div style="left:0;top:58px;width:58px;height:1px;background:#d3d8e5;"></div><div style="left:0;top:77px;width:58px;height:1px;background:#d3d8e5;"></div><div style="left:0;top:96px;width:58px;height:1px;background:#d3d8e5;"></div><div style="left:0;top:115px;width:58px;height:1px;background:#d3d8e5;"></div><div style="left:0;top:134px;width:58px;height:1px;background:#d3d8e5;"></div><div style="left:0;top:153px;width:58px;height:1px;background:#d3d8e5;"></div><div class="n" style="left:0;width:58px;text-align:center;top:22.6px;height:16px;line-height:16px;letter-spacing:0;">6865</div><div class="n" style="left:0;width:58px;text-align:center;top:41.6px;height:16px;line-height:16px;letter-spacing:0;">6860</div><div class="n" style="left:0;width:58px;text-align:center;top:60.6px;height:16px;line-height:16px;letter-spacing:0;">6855</div><div class="n" style="left:0;width:58px;text-align:center;top:79.6px;height:16px;line-height:16px;letter-spacing:0;">6850</div><div class="n" style="left:0;width:58px;text-align:center;top:98.6px;height:16px;line-height:16px;letter-spacing:0;">6845</div><div class="n" style="left:0;width:58px;text-align:center;top:117.6px;height:16px;line-height:16px;letter-spacing:0;">6840</div><div class="n" style="left:0;width:58px;text-align:center;top:136.6px;height:16px;line-height:16px;letter-spacing:0;">6835</div></div>
<div style="left:80px;top:249px;width:448px;height:23px;background:#d6dbe9;border:1px solid #a9b3c9;border-bottom:none;"></div>
<div class="t" style="left:85px;top:252.5px;line-height:16px;height:16px;font-weight:bold;color:#000;font-size:12.5px;letter-spacing:0.05px;">Quarterly</div>
<div class="t" style="left:208.3px;width:200px;text-align:center;top:252.5px;line-height:16px;height:16px;font-weight:bold;color:#000;font-size:12.5px;letter-spacing:0.76px;">30 jun. 26 (90)</div>
<div class="t" style="left:323.29999999999995px;width:200px;text-align:right;top:252.5px;line-height:16px;height:16px;font-weight:bold;color:#000;font-size:12.5px;letter-spacing:0.85px;">22.17%</div>
<div style="left:531px;top:249px;width:448px;height:23px;background:#d6dbe9;border:1px solid #a9b3c9;border-bottom:none;"></div>
<div class="t" style="left:630.0px;width:200px;text-align:center;top:252.5px;line-height:16px;height:16px;font-weight:bold;color:#000;font-size:12.5px;letter-spacing:0.67px;">17 jul. 26 (107)</div>
<div class="t" style="left:772.6px;width:200px;text-align:right;top:252.5px;line-height:16px;height:16px;font-weight:bold;color:#000;font-size:12.5px;letter-spacing:0.93px;">21.95%</div>
<div style="left:80px;top:271px;width:448px;height:22px;background:#fafbfe;border:1px solid #a9b3c9;border-bottom:none;"></div>
<div style="left:135px;top:272px;width:1px;height:20px;background:#d3d8e5;"></div>
<div style="left:190px;top:272px;width:1px;height:20px;background:#d3d8e5;"></div>
<div style="left:245px;top:272px;width:1px;height:20px;background:#d3d8e5;"></div>
<div style="left:300px;top:272px;width:1px;height:20px;background:#d3d8e5;"></div>
<div style="left:355px;top:272px;width:1px;height:20px;background:#d3d8e5;"></div>
<div style="left:410px;top:272px;width:1px;height:20px;background:#d3d8e5;"></div>
<div style="left:465px;top:272px;width:1px;height:20px;background:#d3d8e5;"></div>
<div class="t" style="left:80.5px;width:55px;text-align:center;top:274.0px;line-height:16px;height:16px;font-size:11.6px;letter-spacing:-0.23px;">Mid</div>
<div class="t" style="left:135.5px;width:55px;text-align:center;top:274.0px;line-height:16px;height:16px;font-size:11.6px;letter-spacing:0.42px;">IV</div>
<div class="t" style="left:190.5px;width:55px;text-align:center;top:274.0px;line-height:16px;height:16px;font-size:11.6px;letter-spacing:0.22px;">Delta</div>
<div class="t" style="left:245.5px;width:55px;text-align:center;top:274.0px;line-height:16px;height:16px;font-size:11.6px;letter-spacing:0.55px;">Theta</div>
<div class="t" style="left:300.5px;width:55px;text-align:center;top:274.0px;line-height:16px;height:16px;font-size:11.6px;letter-spacing:-0.05px;">OrigPri...</div>
<div class="t" style="left:355.5px;width:55px;text-align:center;top:274.0px;line-height:16px;height:16px;font-size:11.6px;letter-spacing:0.25px;">IVChg</div>
<div class="t" style="left:410.5px;width:55px;text-align:center;top:274.0px;line-height:16px;height:16px;font-size:11.6px;letter-spacing:0.28px;">Model</div>
<div class="t" style="left:465.5px;width:62px;text-align:center;top:274.0px;line-height:16px;height:16px;font-size:11.6px;letter-spacing:0.00px;">Pos</div>
<div style="left:80px;top:292px;width:448px;height:125px;overflow:hidden;border:1px solid #a9b3c9;border-top:none;background:#a6bfde;">
<div style="left:0;top:0;width:446px;height:125px;background:#a6bfde;"></div>
<div style="left:54px;top:0;width:1px;height:125px;background:#cdd3e2;"></div>
<div style="left:109px;top:0;width:1px;height:125px;background:#cdd3e2;"></div>
<div style="left:164px;top:0;width:1px;height:125px;background:#cdd3e2;"></div>
<div style="left:219px;top:0;width:1px;height:125px;background:#cdd3e2;"></div>
<div style="left:274px;top:0;width:1px;height:125px;background:#cdd3e2;"></div>
<div style="left:329px;top:0;width:1px;height:125px;background:#cdd3e2;"></div>
<div style="left:384px;top:0;width:1px;height:125px;background:#cdd3e2;"></div>
<div style="left:0;top:0px;width:446px;height:1px;background:#dfe3ee;"></div>
<div style="left:0;top:19px;width:446px;height:1px;background:#cdd3e2;"></div>
<div style="left:0;top:38px;width:446px;height:1px;background:#cdd3e2;"></div>
<div style="left:0;top:57px;width:446px;height:1px;background:#cdd3e2;"></div>
<div style="left:0;top:76px;width:446px;height:1px;background:#cdd3e2;"></div>
<div style="left:0;top:95px;width:446px;height:1px;background:#cdd3e2;"></div>
<div style="left:0;top:114px;width:446px;height:1px;background:#cdd3e2;"></div>
<div style="left:0;top:133px;width:446px;height:1px;background:#cdd3e2;"></div>
<div class="n r" style="left:-9px;width:60px;text-align:right;top:3px;height:16px;line-height:16px;">124.25</div>
<div class="n " style="left:46px;width:60px;text-align:right;top:3px;height:16px;line-height:16px;">17.90</div>
<div class="n " style="left:101px;width:60px;text-align:right;top:3px;height:16px;line-height:16px;">33.83</div>
<div class="n " style="left:156px;width:60px;text-align:right;top:3px;height:16px;line-height:16px;">-1.39</div>
<div class="n " style="left:211px;width:60px;text-align:right;top:3px;height:16px;line-height:16px;">113.95</div>
<div class="n " style="left:266px;width:60px;text-align:right;top:3px;height:16px;line-height:16px;">0.87</div>
<div class="n " style="left:383px;width:60px;text-align:right;top:3px;height:16px;line-height:16px;">-1</div>
<div class="n r" style="left:-9px;width:60px;text-align:right;top:22px;height:16px;line-height:16px;">126.50</div>
<div class="n " style="left:46px;width:60px;text-align:right;top:22px;height:16px;line-height:16px;">17.96</div>
<div class="n " style="left:101px;width:60px;text-align:right;top:22px;height:16px;line-height:16px;">34.19</div>
<div class="n " style="left:156px;width:60px;text-align:right;top:22px;height:16px;line-height:16px;">-1.40</div>
<div class="n r" style="left:-9px;width:60px;text-align:right;top:41px;height:16px;line-height:16px;">128.80</div>
<div class="n " style="left:46px;width:60px;text-align:right;top:41px;height:16px;line-height:16px;">18.03</div>
<div class="n " style="left:101px;width:60px;text-align:right;top:41px;height:16px;line-height:16px;">34.56</div>
<div class="n " style="left:156px;width:60px;text-align:right;top:41px;height:16px;line-height:16px;">-1.42</div>
<div class="n r" style="left:-9px;width:60px;text-align:right;top:60px;height:16px;line-height:16px;">131.10</div>
<div class="n " style="left:46px;width:60px;text-align:right;top:60px;height:16px;line-height:16px;">18.09</div>
<div class="n " style="left:101px;width:60px;text-align:right;top:60px;height:16px;line-height:16px;">34.92</div>
<div class="n " style="left:156px;width:60px;text-align:right;top:60px;height:16px;line-height:16px;">-1.43</div>
<div class="n r" style="left:-9px;width:60px;text-align:right;top:79px;height:16px;line-height:16px;">133.45</div>
<div class="n " style="left:46px;width:60px;text-align:right;top:79px;height:16px;line-height:16px;">18.15</div>
<div class="n " style="left:101px;width:60px;text-align:right;top:79px;height:16px;line-height:16px;">35.28</div>
<div class="n " style="left:156px;width:60px;text-align:right;top:79px;height:16px;line-height:16px;">-1.44</div>
<div class="n r" style="left:-9px;width:60px;text-align:right;top:98px;height:16px;line-height:16px;">135.80</div>
<div class="n " style="left:46px;width:60px;text-align:right;top:98px;height:16px;line-height:16px;">18.22</div>
<div class="n " style="left:101px;width:60px;text-align:right;top:98px;height:16px;line-height:16px;">35.64</div>
<div class="n " style="left:156px;width:60px;text-align:right;top:98px;height:16px;line-height:16px;">-1.45</div>
<div class="n r" style="left:-9px;width:60px;text-align:right;top:117px;height:16px;line-height:16px;">138.20</div>
<div class="n " style="left:46px;width:60px;text-align:right;top:117px;height:16px;line-height:16px;">18.28</div>
<div class="n " style="left:101px;width:60px;text-align:right;top:117px;height:16px;line-height:16px;">36.00</div>
<div class="n " style="left:156px;width:60px;text-align:right;top:117px;height:16px;line-height:16px;">-1.46</div>
</div>
<div style="left:531px;top:271px;width:448px;height:22px;background:#fafbfe;border:1px solid #a9b3c9;border-bottom:none;"></div>
<div style="left:584px;top:272px;width:1px;height:20px;background:#d3d8e5;"></div>
<div style="left:637px;top:272px;width:1px;height:20px;background:#d3d8e5;"></div>
<div style="left:690px;top:272px;width:1px;height:20px;background:#d3d8e5;"></div>
<div style="left:743px;top:272px;width:1px;height:20px;background:#d3d8e5;"></div>
<div style="left:796px;top:272px;width:1px;height:20px;background:#d3d8e5;"></div>
<div style="left:849px;top:272px;width:1px;height:20px;background:#d3d8e5;"></div>
<div style="left:902px;top:272px;width:1px;height:20px;background:#d3d8e5;"></div>
<div style="left:961px;top:272px;width:1px;height:20px;background:#d3d8e5;"></div>
<div class="t" style="left:531.5px;width:53px;text-align:center;top:274.0px;line-height:16px;height:16px;font-size:11.6px;letter-spacing:-0.23px;">Mid</div>
<div class="t" style="left:584.5px;width:53px;text-align:center;top:274.0px;line-height:16px;height:16px;font-size:11.6px;letter-spacing:0.42px;">IV</div>
<div class="t" style="left:637.5px;width:53px;text-align:center;top:274.0px;line-height:16px;height:16px;font-size:11.6px;letter-spacing:0.22px;">Delta</div>
<div class="t" style="left:690.5px;width:53px;text-align:center;top:274.0px;line-height:16px;height:16px;font-size:11.6px;letter-spacing:0.55px;">Theta</div>
<div class="t" style="left:743.5px;width:53px;text-align:center;top:274.0px;line-height:16px;height:16px;font-size:11.6px;letter-spacing:-0.05px;">OrigPri...</div>
<div class="t" style="left:796.5px;width:53px;text-align:center;top:274.0px;line-height:16px;height:16px;font-size:11.6px;letter-spacing:0.25px;">IVChg</div>
<div class="t" style="left:849.5px;width:53px;text-align:center;top:274.0px;line-height:16px;height:16px;font-size:11.6px;letter-spacing:0.28px;">Model</div>
<div class="t" style="left:902.5px;width:59px;text-align:center;top:274.0px;line-height:16px;height:16px;font-size:11.6px;letter-spacing:0.00px;">Pos</div>
<div style="left:531px;top:292px;width:448px;height:125px;overflow:hidden;border:1px solid #a9b3c9;border-top:none;background:#d6dbe9;">
<div style="left:0;top:0;width:429px;height:125px;background:#a6bfde;"></div>
<div style="left:52px;top:0;width:1px;height:125px;background:#cdd3e2;"></div>
<div style="left:105px;top:0;width:1px;height:125px;background:#cdd3e2;"></div>
<div style="left:158px;top:0;width:1px;height:125px;background:#cdd3e2;"></div>
<div style="left:211px;top:0;width:1px;height:125px;background:#cdd3e2;"></div>
<div style="left:264px;top:0;width:1px;height:125px;background:#cdd3e2;"></div>
<div style="left:317px;top:0;width:1px;height:125px;background:#cdd3e2;"></div>
<div style="left:370px;top:0;width:1px;height:125px;background:#cdd3e2;"></div>
<div style="left:0;top:0px;width:429px;height:1px;background:#dfe3ee;"></div>
<div style="left:0;top:19px;width:429px;height:1px;background:#cdd3e2;"></div>
<div style="left:0;top:38px;width:429px;height:1px;background:#cdd3e2;"></div>
<div style="left:0;top:57px;width:429px;height:1px;background:#cdd3e2;"></div>
<div style="left:0;top:76px;width:429px;height:1px;background:#cdd3e2;"></div>
<div style="left:0;top:95px;width:429px;height:1px;background:#cdd3e2;"></div>
<div style="left:0;top:114px;width:429px;height:1px;background:#cdd3e2;"></div>
<div style="left:0;top:133px;width:429px;height:1px;background:#cdd3e2;"></div>
<div class="n r" style="left:-11px;width:60px;text-align:right;top:22px;height:16px;line-height:16px;">154.35</div>
<div class="n " style="left:42px;width:60px;text-align:right;top:22px;height:16px;line-height:16px;">18.30</div>
<div class="n " style="left:95px;width:60px;text-align:right;top:22px;height:16px;line-height:16px;">36.71</div>
<div class="n " style="left:148px;width:60px;text-align:right;top:22px;height:16px;line-height:16px;">-1.37</div>
<div class="n g" style="left:-11px;width:60px;text-align:right;top:60px;height:16px;line-height:16px;">159.15</div>
<div class="n " style="left:42px;width:60px;text-align:right;top:60px;height:16px;line-height:16px;">18.42</div>
<div class="n " style="left:95px;width:60px;text-align:right;top:60px;height:16px;line-height:16px;">37.37</div>
<div class="n " style="left:148px;width:60px;text-align:right;top:60px;height:16px;line-height:16px;">-1.39</div>
<div class="n g" style="left:-11px;width:60px;text-align:right;top:98px;height:16px;line-height:16px;">164.20</div>
<div class="n " style="left:42px;width:60px;text-align:right;top:98px;height:16px;line-height:16px;">18.54</div>
<div class="n " style="left:95px;width:60px;text-align:right;top:98px;height:16px;line-height:16px;">38.03</div>
<div class="n " style="left:148px;width:60px;text-align:right;top:98px;height:16px;line-height:16px;">-1.40</div>
</div>
<svg style="left:965px;top:298px" width="9" height="6"><path d="M0.5 5 L4.5 0.8 L8.5 5 Z" fill="#6b7894"/></svg>
<svg style="left:965px;top:406px" width="9" height="6"><path d="M0.5 0.8 L4.5 5 L8.5 0.8 Z" fill="#6b7894"/></svg>
<div style="left:965px;top:338px;width:10px;height:17px;background:#8893ad;"></div>
<div style="left:17px;top:429px;width:60px;height:473px;background:#fff;border:1px solid #a9b3c9;overflow:hidden;"><div style="left:0;top:0;width:58px;height:20px;background:#f7f8fc;"></div><div class="t" style="left:0;width:58px;text-align:center;top:2.0px;height:16px;line-height:16px;font-size:11.6px;letter-spacing:-0.23px;">PUTS</div><div style="left:0;top:20px;width:58px;height:1px;background:#d3d8e5;"></div><div style="left:0;top:39px;width:58px;height:1px;background:#d3d8e5;"></div><div style="left:0;top:58px;width:58px;height:1px;background:#d3d8e5;"></div><div style="left:0;top:77px;width:58px;height:1px;background:#d3d8e5;"></div><div style="left:0;top:96px;width:58px;height:1px;background:#d3d8e5;"></div><div style="left:0;top:115px;width:58px;height:1px;background:#d3d8e5;"></div><div style="left:0;top:134px;width:58px;height:1px;background:#d3d8e5;"></div><div style="left:0;top:153px;width:58px;height:1px;background:#d3d8e5;"></div><div style="left:0;top:172px;width:58px;height:1px;background:#d3d8e5;"></div><div style="left:0;top:191px;width:58px;height:1px;background:#d3d8e5;"></div><div style="left:0;top:210px;width:58px;height:1px;background:#d3d8e5;"></div><div style="left:0;top:229px;width:58px;height:1px;background:#d3d8e5;"></div><div style="left:0;top:248px;width:58px;height:1px;background:#d3d8e5;"></div><div style="left:0;top:267px;width:58px;height:1px;background:#d3d8e5;"></div><div style="left:0;top:286px;width:58px;height:1px;background:#d3d8e5;"></div><div style="left:0;top:305px;width:58px;height:1px;background:#d3d8e5;"></div><div style="left:0;top:324px;width:58px;height:1px;background:#d3d8e5;"></div><div style="left:0;top:343px;width:58px;height:1px;background:#d3d8e5;"></div><div style="left:0;top:362px;width:58px;height:1px;background:#d3d8e5;"></div><div style="left:0;top:381px;width:58px;height:1px;background:#d3d8e5;"></div><div style="left:0;top:400px;width:58px;height:1px;background:#d3d8e5;"></div><div style="left:0;top:419px;width:58px;height:1px;background:#d3d8e5;"></div><div style="left:0;top:438px;width:58px;height:1px;background:#d3d8e5;"></div><div style="left:0;top:457px;width:58px;height:1px;background:#d3d8e5;"></div><div style="left:0;top:476px;width:58px;height:1px;background:#d3d8e5;"></div><div class="n" style="left:0;width:58px;text-align:center;top:22.6px;height:16px;line-height:16px;letter-spacing:0;">6180</div><div class="n" style="left:0;width:58px;text-align:center;top:41.6px;height:16px;line-height:16px;letter-spacing:0;">6175</div><div class="n" style="left:0;width:58px;text-align:center;top:60.6px;height:16px;line-height:16px;letter-spacing:0;">6170</div><div class="n" style="left:0;width:58px;text-align:center;top:79.6px;height:16px;line-height:16px;letter-spacing:0;">6165</div><div class="n" style="left:0;width:58px;text-align:center;top:98.6px;height:16px;line-height:16px;letter-spacing:0;">6160</div><div class="n" style="left:0;width:58px;text-align:center;top:117.6px;height:16px;line-height:16px;letter-spacing:0;">6155</div><div class="n" style="left:0;width:58px;text-align:center;top:136.6px;height:16px;line-height:16px;letter-spacing:0;">6150</div><div class="n" style="left:0;width:58px;text-align:center;top:155.6px;height:16px;line-height:16px;letter-spacing:0;">6145</div><div class="n" style="left:0;width:58px;text-align:center;top:174.6px;height:16px;line-height:16px;letter-spacing:0;">6140</div><div class="n" style="left:0;width:58px;text-align:center;top:193.6px;height:16px;line-height:16px;letter-spacing:0;">6135</div><div class="n" style="left:0;width:58px;text-align:center;top:212.6px;height:16px;line-height:16px;letter-spacing:0;">6130</div><div class="n" style="left:0;width:58px;text-align:center;top:231.6px;height:16px;line-height:16px;letter-spacing:0;">6125</div><div class="n" style="left:0;width:58px;text-align:center;top:250.6px;height:16px;line-height:16px;letter-spacing:0;">6120</div><div class="n" style="left:0;width:58px;text-align:center;top:269.6px;height:16px;line-height:16px;letter-spacing:0;">6115</div><div class="n" style="left:0;width:58px;text-align:center;top:288.6px;height:16px;line-height:16px;letter-spacing:0;">6110</div><div class="n" style="left:0;width:58px;text-align:center;top:307.6px;height:16px;line-height:16px;letter-spacing:0;">6105</div><div class="n" style="left:0;width:58px;text-align:center;top:326.6px;height:16px;line-height:16px;letter-spacing:0;">6100</div><div class="n" style="left:0;width:58px;text-align:center;top:345.6px;height:16px;line-height:16px;letter-spacing:0;">6095</div><div class="n" style="left:0;width:58px;text-align:center;top:364.6px;height:16px;line-height:16px;letter-spacing:0;">6090</div><div class="n" style="left:0;width:58px;text-align:center;top:383.6px;height:16px;line-height:16px;letter-spacing:0;">6085</div><div class="n" style="left:0;width:58px;text-align:center;top:402.6px;height:16px;line-height:16px;letter-spacing:0;">6080</div><div class="n" style="left:0;width:58px;text-align:center;top:421.6px;height:16px;line-height:16px;letter-spacing:0;">6075</div><div class="n" style="left:0;width:58px;text-align:center;top:440.6px;height:16px;line-height:16px;letter-spacing:0;">6070</div><div class="n" style="left:0;width:58px;text-align:center;top:459.6px;height:16px;line-height:16px;letter-spacing:0;">6065</div></div>
<div style="left:80px;top:429px;width:448px;height:22px;background:#fafbfe;border:1px solid #a9b3c9;border-bottom:none;"></div>
<div style="left:135px;top:430px;width:1px;height:20px;background:#d3d8e5;"></div>
<div style="left:190px;top:430px;width:1px;height:20px;background:#d3d8e5;"></div>
<div style="left:245px;top:430px;width:1px;height:20px;background:#d3d8e5;"></div>
<div style="left:300px;top:430px;width:1px;height:20px;background:#d3d8e5;"></div>
<div style="left:355px;top:430px;width:1px;height:20px;background:#d3d8e5;"></div>
<div style="left:410px;top:430px;width:1px;height:20px;background:#d3d8e5;"></div>
<div style="left:465px;top:430px;width:1px;height:20px;background:#d3d8e5;"></div>
<div class="t" style="left:80.5px;width:55px;text-align:center;top:432.0px;line-height:16px;height:16px;font-size:11.6px;letter-spacing:-0.23px;">Mid</div>
<div class="t" style="left:135.5px;width:55px;text-align:center;top:432.0px;line-height:16px;height:16px;font-size:11.6px;letter-spacing:0.42px;">IV</div>
<div class="t" style="left:190.5px;width:55px;text-align:center;top:432.0px;line-height:16px;height:16px;font-size:11.6px;letter-spacing:0.22px;">Delta</div>
<div class="t" style="left:245.5px;width:55px;text-align:center;top:432.0px;line-height:16px;height:16px;font-size:11.6px;letter-spacing:0.55px;">Theta</div>
<div class="t" style="left:300.5px;width:55px;text-align:center;top:432.0px;line-height:16px;height:16px;font-size:11.6px;letter-spacing:-0.05px;">OrigPri...</div>
<div class="t" style="left:355.5px;width:55px;text-align:center;top:432.0px;line-height:16px;height:16px;font-size:11.6px;letter-spacing:0.25px;">IVChg</div>
<div class="t" style="left:410.5px;width:55px;text-align:center;top:432.0px;line-height:16px;height:16px;font-size:11.6px;letter-spacing:0.28px;">Model</div>
<div class="t" style="left:465.5px;width:62px;text-align:center;top:432.0px;line-height:16px;height:16px;font-size:11.6px;letter-spacing:0.00px;">Pos</div>
<div style="left:80px;top:450px;width:448px;height:452px;overflow:hidden;border:1px solid #a9b3c9;border-top:none;background:#a6bfde;">
<div style="left:0;top:0;width:446px;height:452px;background:#a6bfde;"></div>
<div style="left:54px;top:0;width:1px;height:452px;background:#cdd3e2;"></div>
<div style="left:109px;top:0;width:1px;height:452px;background:#cdd3e2;"></div>
<div style="left:164px;top:0;width:1px;height:452px;background:#cdd3e2;"></div>
<div style="left:219px;top:0;width:1px;height:452px;background:#cdd3e2;"></div>
<div style="left:274px;top:0;width:1px;height:452px;background:#cdd3e2;"></div>
<div style="left:329px;top:0;width:1px;height:452px;background:#cdd3e2;"></div>
<div style="left:384px;top:0;width:1px;height:452px;background:#cdd3e2;"></div>
<div style="left:0;top:0px;width:446px;height:1px;background:#dfe3ee;"></div>
<div style="left:0;top:19px;width:446px;height:1px;background:#cdd3e2;"></div>
<div style="left:0;top:38px;width:446px;height:1px;background:#cdd3e2;"></div>
<div style="left:0;top:57px;width:446px;height:1px;background:#cdd3e2;"></div>
<div style="left:0;top:76px;width:446px;height:1px;background:#cdd3e2;"></div>
<div style="left:0;top:95px;width:446px;height:1px;background:#cdd3e2;"></div>
<div style="left:0;top:114px;width:446px;height:1px;background:#cdd3e2;"></div>
<div style="left:0;top:133px;width:446px;height:1px;background:#cdd3e2;"></div>
<div style="left:0;top:152px;width:446px;height:1px;background:#cdd3e2;"></div>
<div style="left:0;top:171px;width:446px;height:1px;background:#cdd3e2;"></div>
<div style="left:0;top:190px;width:446px;height:1px;background:#cdd3e2;"></div>
<div style="left:0;top:209px;width:446px;height:1px;background:#cdd3e2;"></div>
<div style="left:0;top:228px;width:446px;height:1px;background:#cdd3e2;"></div>
<div style="left:0;top:247px;width:446px;height:1px;background:#cdd3e2;"></div>
<div style="left:0;top:266px;width:446px;height:1px;background:#cdd3e2;"></div>
<div style="left:0;top:285px;width:446px;height:1px;background:#cdd3e2;"></div>
<div style="left:0;top:304px;width:446px;height:1px;background:#cdd3e2;"></div>
<div style="left:0;top:323px;width:446px;height:1px;background:#cdd3e2;"></div>
<div style="left:0;top:342px;width:446px;height:1px;background:#cdd3e2;"></div>
<div style="left:0;top:361px;width:446px;height:1px;background:#cdd3e2;"></div>
<div style="left:0;top:380px;width:446px;height:1px;background:#cdd3e2;"></div>
<div style="left:0;top:399px;width:446px;height:1px;background:#cdd3e2;"></div>
<div style="left:0;top:418px;width:446px;height:1px;background:#cdd3e2;"></div>
<div style="left:0;top:437px;width:446px;height:1px;background:#cdd3e2;"></div>
<div style="left:0;top:456px;width:446px;height:1px;background:#cdd3e2;"></div>
<div class="n g" style="left:-9px;width:60px;text-align:right;top:3px;height:16px;line-height:16px;">133.00</div>
<div class="n " style="left:46px;width:60px;text-align:right;top:3px;height:16px;line-height:16px;">23.33</div>
<div class="n " style="left:101px;width:60px;text-align:right;top:3px;height:16px;line-height:16px;">-27.05</div>
<div class="n " style="left:156px;width:60px;text-align:right;top:3px;height:16px;line-height:16px;">-1.20</div>
<div class="n " style="left:211px;width:60px;text-align:right;top:3px;height:16px;line-height:16px;">143.10</div>
<div class="n " style="left:266px;width:60px;text-align:right;top:3px;height:16px;line-height:16px;">-0.94</div>
<div class="n " style="left:383px;width:60px;text-align:right;top:3px;height:16px;line-height:16px;">+1</div>
<div class="n g" style="left:-9px;width:60px;text-align:right;top:22px;height:16px;line-height:16px;">132.00</div>
<div class="n " style="left:46px;width:60px;text-align:right;top:22px;height:16px;line-height:16px;">23.38</div>
<div class="n " style="left:101px;width:60px;text-align:right;top:22px;height:16px;line-height:16px;">-26.85</div>
<div class="n " style="left:156px;width:60px;text-align:right;top:22px;height:16px;line-height:16px;">-1.20</div>
<div class="n g" style="left:-9px;width:60px;text-align:right;top:41px;height:16px;line-height:16px;">131.00</div>
<div class="n " style="left:46px;width:60px;text-align:right;top:41px;height:16px;line-height:16px;">23.43</div>
<div class="n " style="left:101px;width:60px;text-align:right;top:41px;height:16px;line-height:16px;">-26.66</div>
<div class="n " style="left:156px;width:60px;text-align:right;top:41px;height:16px;line-height:16px;">-1.19</div>
<div class="n g" style="left:-9px;width:60px;text-align:right;top:60px;height:16px;line-height:16px;">130.05</div>
<div class="n " style="left:46px;width:60px;text-align:right;top:60px;height:16px;line-height:16px;">23.48</div>
<div class="n " style="left:101px;width:60px;text-align:right;top:60px;height:16px;line-height:16px;">-26.47</div>
<div class="n " style="left:156px;width:60px;text-align:right;top:60px;height:16px;line-height:16px;">-1.19</div>
<div class="n g" style="left:-9px;width:60px;text-align:right;top:79px;height:16px;line-height:16px;">129.05</div>
<div class="n " style="left:46px;width:60px;text-align:right;top:79px;height:16px;line-height:16px;">23.53</div>
<div class="n " style="left:101px;width:60px;text-align:right;top:79px;height:16px;line-height:16px;">-26.27</div>
<div class="n " style="left:156px;width:60px;text-align:right;top:79px;height:16px;line-height:16px;">-1.19</div>
<div class="n g" style="left:-9px;width:60px;text-align:right;top:98px;height:16px;line-height:16px;">128.10</div>
<div class="n " style="left:46px;width:60px;text-align:right;top:98px;height:16px;line-height:16px;">23.58</div>
<div class="n " style="left:101px;width:60px;text-align:right;top:98px;height:16px;line-height:16px;">-26.08</div>
<div class="n " style="left:156px;width:60px;text-align:right;top:98px;height:16px;line-height:16px;">-1.19</div>
<div class="n g" style="left:-9px;width:60px;text-align:right;top:117px;height:16px;line-height:16px;">127.15</div>
<div class="n " style="left:46px;width:60px;text-align:right;top:117px;height:16px;line-height:16px;">23.63</div>
<div class="n " style="left:101px;width:60px;text-align:right;top:117px;height:16px;line-height:16px;">-25.90</div>
<div class="n " style="left:156px;width:60px;text-align:right;top:117px;height:16px;line-height:16px;">-1.19</div>
<div class="n g" style="left:-9px;width:60px;text-align:right;top:136px;height:16px;line-height:16px;">126.20</div>
<div class="n " style="left:46px;width:60px;text-align:right;top:136px;height:16px;line-height:16px;">23.68</div>
<div class="n " style="left:101px;width:60px;text-align:right;top:136px;height:16px;line-height:16px;">-25.71</div>
<div class="n " style="left:156px;width:60px;text-align:right;top:136px;height:16px;line-height:16px;">-1.19</div>
<div class="n r" style="left:-9px;width:60px;text-align:right;top:155px;height:16px;line-height:16px;">125.20</div>
<div class="n " style="left:46px;width:60px;text-align:right;top:155px;height:16px;line-height:16px;">23.73</div>
<div class="n " style="left:101px;width:60px;text-align:right;top:155px;height:16px;line-height:16px;">-25.52</div>
<div class="n " style="left:156px;width:60px;text-align:right;top:155px;height:16px;line-height:16px;">-1.19</div>
<div class="n g" style="left:-9px;width:60px;text-align:right;top:174px;height:16px;line-height:16px;">124.30</div>
<div class="n " style="left:46px;width:60px;text-align:right;top:174px;height:16px;line-height:16px;">23.78</div>
<div class="n " style="left:101px;width:60px;text-align:right;top:174px;height:16px;line-height:16px;">-25.34</div>
<div class="n " style="left:156px;width:60px;text-align:right;top:174px;height:16px;line-height:16px;">-1.19</div>
<div class="n g" style="left:-9px;width:60px;text-align:right;top:193px;height:16px;line-height:16px;">123.35</div>
<div class="n " style="left:46px;width:60px;text-align:right;top:193px;height:16px;line-height:16px;">23.83</div>
<div class="n " style="left:101px;width:60px;text-align:right;top:193px;height:16px;line-height:16px;">-25.15</div>
<div class="n " style="left:156px;width:60px;text-align:right;top:193px;height:16px;line-height:16px;">-1.19</div>
<div class="n g" style="left:-9px;width:60px;text-align:right;top:212px;height:16px;line-height:16px;">122.40</div>
<div class="n " style="left:46px;width:60px;text-align:right;top:212px;height:16px;line-height:16px;">23.87</div>
<div class="n " style="left:101px;width:60px;text-align:right;top:212px;height:16px;line-height:16px;">-24.97</div>
<div class="n " style="left:156px;width:60px;text-align:right;top:212px;height:16px;line-height:16px;">-1.19</div>
<div class="n g" style="left:-9px;width:60px;text-align:right;top:231px;height:16px;line-height:16px;">121.50</div>
<div class="n " style="left:46px;width:60px;text-align:right;top:231px;height:16px;line-height:16px;">23.93</div>
<div class="n " style="left:101px;width:60px;text-align:right;top:231px;height:16px;line-height:16px;">-24.79</div>
<div class="n " style="left:156px;width:60px;text-align:right;top:231px;height:16px;line-height:16px;">-1.18</div>
<div class="n g" style="left:-9px;width:60px;text-align:right;top:250px;height:16px;line-height:16px;">120.60</div>
<div class="n " style="left:46px;width:60px;text-align:right;top:250px;height:16px;line-height:16px;">23.98</div>
<div class="n " style="left:101px;width:60px;text-align:right;top:250px;height:16px;line-height:16px;">-24.61</div>
<div class="n " style="left:156px;width:60px;text-align:right;top:250px;height:16px;line-height:16px;">-1.18</div>
<div class="n g" style="left:-9px;width:60px;text-align:right;top:269px;height:16px;line-height:16px;">119.65</div>
<div class="n " style="left:46px;width:60px;text-align:right;top:269px;height:16px;line-height:16px;">24.02</div>
<div class="n " style="left:101px;width:60px;text-align:right;top:269px;height:16px;line-height:16px;">-24.42</div>
<div class="n " style="left:156px;width:60px;text-align:right;top:269px;height:16px;line-height:16px;">-1.18</div>
<div class="n g" style="left:-9px;width:60px;text-align:right;top:288px;height:16px;line-height:16px;">118.75</div>
<div class="n " style="left:46px;width:60px;text-align:right;top:288px;height:16px;line-height:16px;">24.07</div>
<div class="n " style="left:101px;width:60px;text-align:right;top:288px;height:16px;line-height:16px;">-24.25</div>
<div class="n " style="left:156px;width:60px;text-align:right;top:288px;height:16px;line-height:16px;">-1.18</div>
<div class="n r" style="left:-9px;width:60px;text-align:right;top:307px;height:16px;line-height:16px;">117.85</div>
<div class="n " style="left:46px;width:60px;text-align:right;top:307px;height:16px;line-height:16px;">24.12</div>
<div class="n " style="left:101px;width:60px;text-align:right;top:307px;height:16px;line-height:16px;">-24.07</div>
<div class="n " style="left:156px;width:60px;text-align:right;top:307px;height:16px;line-height:16px;">-1.18</div>
<div class="n g" style="left:-9px;width:60px;text-align:right;top:326px;height:16px;line-height:16px;">117.00</div>
<div class="n " style="left:46px;width:60px;text-align:right;top:326px;height:16px;line-height:16px;">24.17</div>
<div class="n " style="left:101px;width:60px;text-align:right;top:326px;height:16px;line-height:16px;">-23.90</div>
<div class="n " style="left:156px;width:60px;text-align:right;top:326px;height:16px;line-height:16px;">-1.18</div>
<div class="n g" style="left:-9px;width:60px;text-align:right;top:345px;height:16px;line-height:16px;">116.10</div>
<div class="n " style="left:46px;width:60px;text-align:right;top:345px;height:16px;line-height:16px;">24.22</div>
<div class="n " style="left:101px;width:60px;text-align:right;top:345px;height:16px;line-height:16px;">-23.72</div>
<div class="n " style="left:156px;width:60px;text-align:right;top:345px;height:16px;line-height:16px;">-1.18</div>
<div class="n g" style="left:-9px;width:60px;text-align:right;top:364px;height:16px;line-height:16px;">115.25</div>
<div class="n " style="left:46px;width:60px;text-align:right;top:364px;height:16px;line-height:16px;">24.27</div>
<div class="n " style="left:101px;width:60px;text-align:right;top:364px;height:16px;line-height:16px;">-23.55</div>
<div class="n " style="left:156px;width:60px;text-align:right;top:364px;height:16px;line-height:16px;">-1.18</div>
<div class="n g" style="left:-9px;width:60px;text-align:right;top:383px;height:16px;line-height:16px;">114.35</div>
<div class="n " style="left:46px;width:60px;text-align:right;top:383px;height:16px;line-height:16px;">24.32</div>
<div class="n " style="left:101px;width:60px;text-align:right;top:383px;height:16px;line-height:16px;">-23.37</div>
<div class="n " style="left:156px;width:60px;text-align:right;top:383px;height:16px;line-height:16px;">-1.17</div>
<div class="n g" style="left:-9px;width:60px;text-align:right;top:402px;height:16px;line-height:16px;">113.50</div>
<div class="n " style="left:46px;width:60px;text-align:right;top:402px;height:16px;line-height:16px;">24.37</div>
<div class="n " style="left:101px;width:60px;text-align:right;top:402px;height:16px;line-height:16px;">-23.20</div>
<div class="n " style="left:156px;width:60px;text-align:right;top:402px;height:16px;line-height:16px;">-1.17</div>
<div class="n g" style="left:-9px;width:60px;text-align:right;top:421px;height:16px;line-height:16px;">112.65</div>
<div class="n " style="left:46px;width:60px;text-align:right;top:421px;height:16px;line-height:16px;">24.41</div>
<div class="n " style="left:101px;width:60px;text-align:right;top:421px;height:16px;line-height:16px;">-23.03</div>
<div class="n " style="left:156px;width:60px;text-align:right;top:421px;height:16px;line-height:16px;">-1.17</div>
<div class="n g" style="left:-9px;width:60px;text-align:right;top:440px;height:16px;line-height:16px;">111.80</div>
<div class="n " style="left:46px;width:60px;text-align:right;top:440px;height:16px;line-height:16px;">24.46</div>
<div class="n " style="left:101px;width:60px;text-align:right;top:440px;height:16px;line-height:16px;">-22.87</div>
<div class="n " style="left:156px;width:60px;text-align:right;top:440px;height:16px;line-height:16px;">-1.17</div>
</div>
<div style="left:531px;top:429px;width:448px;height:22px;background:#fafbfe;border:1px solid #a9b3c9;border-bottom:none;"></div>
<div style="left:584px;top:430px;width:1px;height:20px;background:#d3d8e5;"></div>
<div style="left:637px;top:430px;width:1px;height:20px;background:#d3d8e5;"></div>
<div style="left:690px;top:430px;width:1px;height:20px;background:#d3d8e5;"></div>
<div style="left:743px;top:430px;width:1px;height:20px;background:#d3d8e5;"></div>
<div style="left:796px;top:430px;width:1px;height:20px;background:#d3d8e5;"></div>
<div style="left:849px;top:430px;width:1px;height:20px;background:#d3d8e5;"></div>
<div style="left:902px;top:430px;width:1px;height:20px;background:#d3d8e5;"></div>
<div style="left:961px;top:430px;width:1px;height:20px;background:#d3d8e5;"></div>
<div class="t" style="left:531.5px;width:53px;text-align:center;top:432.0px;line-height:16px;height:16px;font-size:11.6px;letter-spacing:-0.23px;">Mid</div>
<div class="t" style="left:584.5px;width:53px;text-align:center;top:432.0px;line-height:16px;height:16px;font-size:11.6px;letter-spacing:0.42px;">IV</div>
<div class="t" style="left:637.5px;width:53px;text-align:center;top:432.0px;line-height:16px;height:16px;font-size:11.6px;letter-spacing:0.22px;">Delta</div>
<div class="t" style="left:690.5px;width:53px;text-align:center;top:432.0px;line-height:16px;height:16px;font-size:11.6px;letter-spacing:0.55px;">Theta</div>
<div class="t" style="left:743.5px;width:53px;text-align:center;top:432.0px;line-height:16px;height:16px;font-size:11.6px;letter-spacing:-0.05px;">OrigPri...</div>
<div class="t" style="left:796.5px;width:53px;text-align:center;top:432.0px;line-height:16px;height:16px;font-size:11.6px;letter-spacing:0.25px;">IVChg</div>
<div class="t" style="left:849.5px;width:53px;text-align:center;top:432.0px;line-height:16px;height:16px;font-size:11.6px;letter-spacing:0.28px;">Model</div>
<div class="t" style="left:902.5px;width:59px;text-align:center;top:432.0px;line-height:16px;height:16px;font-size:11.6px;letter-spacing:0.00px;">Pos</div>
<div style="left:531px;top:450px;width:448px;height:452px;overflow:hidden;border:1px solid #a9b3c9;border-top:none;background:#d6dbe9;">
<div style="left:0;top:0;width:429px;height:452px;background:#a6bfde;"></div>
<div style="left:52px;top:0;width:1px;height:452px;background:#cdd3e2;"></div>
<div style="left:105px;top:0;width:1px;height:452px;background:#cdd3e2;"></div>
<div style="left:158px;top:0;width:1px;height:452px;background:#cdd3e2;"></div>
<div style="left:211px;top:0;width:1px;height:452px;background:#cdd3e2;"></div>
<div style="left:264px;top:0;width:1px;height:452px;background:#cdd3e2;"></div>
<div style="left:317px;top:0;width:1px;height:452px;background:#cdd3e2;"></div>
<div style="left:370px;top:0;width:1px;height:452px;background:#cdd3e2;"></div>
<div style="left:0;top:0px;width:429px;height:1px;background:#dfe3ee;"></div>
<div style="left:0;top:19px;width:429px;height:1px;background:#cdd3e2;"></div>
<div style="left:0;top:38px;width:429px;height:1px;background:#cdd3e2;"></div>
<div style="left:0;top:57px;width:429px;height:1px;background:#cdd3e2;"></div>
<div style="left:0;top:76px;width:429px;height:1px;background:#cdd3e2;"></div>
<div style="left:0;top:95px;width:429px;height:1px;background:#cdd3e2;"></div>
<div style="left:0;top:114px;width:429px;height:1px;background:#cdd3e2;"></div>
<div style="left:0;top:133px;width:429px;height:1px;background:#cdd3e2;"></div>
<div style="left:0;top:152px;width:429px;height:1px;background:#cdd3e2;"></div>
<div style="left:0;top:171px;width:429px;height:1px;background:#cdd3e2;"></div>
<div style="left:0;top:190px;width:429px;height:1px;background:#cdd3e2;"></div>
<div style="left:0;top:209px;width:429px;height:1px;background:#cdd3e2;"></div>
<div style="left:0;top:228px;width:429px;height:1px;background:#cdd3e2;"></div>
<div style="left:0;top:247px;width:429px;height:1px;background:#cdd3e2;"></div>
<div style="left:0;top:266px;width:429px;height:1px;background:#cdd3e2;"></div>
<div style="left:0;top:285px;width:429px;height:1px;background:#cdd3e2;"></div>
<div style="left:0;top:304px;width:429px;height:1px;background:#cdd3e2;"></div>
<div style="left:0;top:323px;width:429px;height:1px;background:#cdd3e2;"></div>
<div style="left:0;top:342px;width:429px;height:1px;background:#cdd3e2;"></div>
<div style="left:0;top:361px;width:429px;height:1px;background:#cdd3e2;"></div>
<div style="left:0;top:380px;width:429px;height:1px;background:#cdd3e2;"></div>
<div style="left:0;top:399px;width:429px;height:1px;background:#cdd3e2;"></div>
<div style="left:0;top:418px;width:429px;height:1px;background:#cdd3e2;"></div>
<div style="left:0;top:437px;width:429px;height:1px;background:#cdd3e2;"></div>
<div style="left:0;top:456px;width:429px;height:1px;background:#cdd3e2;"></div>
<div class="n g" style="left:-11px;width:60px;text-align:right;top:3px;height:16px;line-height:16px;">151.45</div>
<div class="n " style="left:42px;width:60px;text-align:right;top:3px;height:16px;line-height:16px;">23.25</div>
<div class="n " style="left:95px;width:60px;text-align:right;top:3px;height:16px;line-height:16px;">-27.89</div>
<div class="n " style="left:148px;width:60px;text-align:right;top:3px;height:16px;line-height:16px;">-1.09</div>
<div class="n r" style="left:-11px;width:60px;text-align:right;top:22px;height:16px;line-height:16px;">150.45</div>
<div class="n " style="left:42px;width:60px;text-align:right;top:22px;height:16px;line-height:16px;">23.30</div>
<div class="n " style="left:95px;width:60px;text-align:right;top:22px;height:16px;line-height:16px;">-27.71</div>
<div class="n " style="left:148px;width:60px;text-align:right;top:22px;height:16px;line-height:16px;">-1.09</div>
<div class="n g" style="left:-11px;width:60px;text-align:right;top:41px;height:16px;line-height:16px;">149.40</div>
<div class="n " style="left:42px;width:60px;text-align:right;top:41px;height:16px;line-height:16px;">23.34</div>
<div class="n " style="left:95px;width:60px;text-align:right;top:41px;height:16px;line-height:16px;">-27.52</div>
<div class="n " style="left:148px;width:60px;text-align:right;top:41px;height:16px;line-height:16px;">-1.09</div>
<div class="n r" style="left:-11px;width:60px;text-align:right;top:60px;height:16px;line-height:16px;">148.40</div>
<div class="n " style="left:42px;width:60px;text-align:right;top:60px;height:16px;line-height:16px;">23.39</div>
<div class="n " style="left:95px;width:60px;text-align:right;top:60px;height:16px;line-height:16px;">-27.34</div>
<div class="n " style="left:148px;width:60px;text-align:right;top:60px;height:16px;line-height:16px;">-1.09</div>
<div class="n g" style="left:-11px;width:60px;text-align:right;top:79px;height:16px;line-height:16px;">147.40</div>
<div class="n " style="left:42px;width:60px;text-align:right;top:79px;height:16px;line-height:16px;">23.44</div>
<div class="n " style="left:95px;width:60px;text-align:right;top:79px;height:16px;line-height:16px;">-27.16</div>
<div class="n " style="left:148px;width:60px;text-align:right;top:79px;height:16px;line-height:16px;">-1.09</div>
<div class="n r" style="left:-11px;width:60px;text-align:right;top:98px;height:16px;line-height:16px;">146.40</div>
<div class="n " style="left:42px;width:60px;text-align:right;top:98px;height:16px;line-height:16px;">23.49</div>
<div class="n " style="left:95px;width:60px;text-align:right;top:98px;height:16px;line-height:16px;">-26.98</div>
<div class="n " style="left:148px;width:60px;text-align:right;top:98px;height:16px;line-height:16px;">-1.09</div>
<div class="n g" style="left:-11px;width:60px;text-align:right;top:117px;height:16px;line-height:16px;">145.35</div>
<div class="n " style="left:42px;width:60px;text-align:right;top:117px;height:16px;line-height:16px;">23.53</div>
<div class="n " style="left:95px;width:60px;text-align:right;top:117px;height:16px;line-height:16px;">-26.80</div>
<div class="n " style="left:148px;width:60px;text-align:right;top:117px;height:16px;line-height:16px;">-1.09</div>
<div class="n r" style="left:-11px;width:60px;text-align:right;top:136px;height:16px;line-height:16px;">144.35</div>
<div class="n " style="left:42px;width:60px;text-align:right;top:136px;height:16px;line-height:16px;">23.58</div>
<div class="n " style="left:95px;width:60px;text-align:right;top:136px;height:16px;line-height:16px;">-26.62</div>
<div class="n " style="left:148px;width:60px;text-align:right;top:136px;height:16px;line-height:16px;">-1.09</div>
<div class="n g" style="left:-11px;width:60px;text-align:right;top:155px;height:16px;line-height:16px;">143.35</div>
<div class="n " style="left:42px;width:60px;text-align:right;top:155px;height:16px;line-height:16px;">23.62</div>
<div class="n " style="left:95px;width:60px;text-align:right;top:155px;height:16px;line-height:16px;">-26.44</div>
<div class="n " style="left:148px;width:60px;text-align:right;top:155px;height:16px;line-height:16px;">-1.09</div>
<div class="n g" style="left:-11px;width:60px;text-align:right;top:193px;height:16px;line-height:16px;">141.40</div>
<div class="n " style="left:42px;width:60px;text-align:right;top:193px;height:16px;line-height:16px;">23.72</div>
<div class="n " style="left:95px;width:60px;text-align:right;top:193px;height:16px;line-height:16px;">-26.09</div>
<div class="n " style="left:148px;width:60px;text-align:right;top:193px;height:16px;line-height:16px;">-1.08</div>
<div class="n g" style="left:-11px;width:60px;text-align:right;top:212px;height:16px;line-height:16px;">140.45</div>
<div class="n " style="left:42px;width:60px;text-align:right;top:212px;height:16px;line-height:16px;">23.76</div>
<div class="n " style="left:95px;width:60px;text-align:right;top:212px;height:16px;line-height:16px;">-25.92</div>
<div class="n " style="left:148px;width:60px;text-align:right;top:212px;height:16px;line-height:16px;">-1.08</div>
<div class="n g" style="left:-11px;width:60px;text-align:right;top:231px;height:16px;line-height:16px;">139.50</div>
<div class="n " style="left:42px;width:60px;text-align:right;top:231px;height:16px;line-height:16px;">23.81</div>
<div class="n " style="left:95px;width:60px;text-align:right;top:231px;height:16px;line-height:16px;">-25.75</div>
<div class="n " style="left:148px;width:60px;text-align:right;top:231px;height:16px;line-height:16px;">-1.08</div>
<div class="n g" style="left:-11px;width:60px;text-align:right;top:269px;height:16px;line-height:16px;">137.60</div>
<div class="n " style="left:42px;width:60px;text-align:right;top:269px;height:16px;line-height:16px;">23.90</div>
<div class="n " style="left:95px;width:60px;text-align:right;top:269px;height:16px;line-height:16px;">-25.41</div>
<div class="n " style="left:148px;width:60px;text-align:right;top:269px;height:16px;line-height:16px;">-1.08</div>
<div class="n g" style="left:-11px;width:60px;text-align:right;top:307px;height:16px;line-height:16px;">135.75</div>
<div class="n " style="left:42px;width:60px;text-align:right;top:307px;height:16px;line-height:16px;">24.00</div>
<div class="n " style="left:95px;width:60px;text-align:right;top:307px;height:16px;line-height:16px;">-25.07</div>
<div class="n " style="left:148px;width:60px;text-align:right;top:307px;height:16px;line-height:16px;">-1.08</div>
<div class="n g" style="left:-11px;width:60px;text-align:right;top:345px;height:16px;line-height:16px;">133.85</div>
<div class="n " style="left:42px;width:60px;text-align:right;top:345px;height:16px;line-height:16px;">24.09</div>
<div class="n " style="left:95px;width:60px;text-align:right;top:345px;height:16px;line-height:16px;">-24.74</div>
<div class="n " style="left:148px;width:60px;text-align:right;top:345px;height:16px;line-height:16px;">-1.08</div>
<div class="n g" style="left:-11px;width:60px;text-align:right;top:383px;height:16px;line-height:16px;">132.05</div>
<div class="n " style="left:42px;width:60px;text-align:right;top:383px;height:16px;line-height:16px;">24.18</div>
<div class="n " style="left:95px;width:60px;text-align:right;top:383px;height:16px;line-height:16px;">-24.41</div>
<div class="n " style="left:148px;width:60px;text-align:right;top:383px;height:16px;line-height:16px;">-1.08</div>
<div class="n g" style="left:-11px;width:60px;text-align:right;top:402px;height:16px;line-height:16px;">131.10</div>
<div class="n " style="left:42px;width:60px;text-align:right;top:402px;height:16px;line-height:16px;">24.22</div>
<div class="n " style="left:95px;width:60px;text-align:right;top:402px;height:16px;line-height:16px;">-24.24</div>
<div class="n " style="left:148px;width:60px;text-align:right;top:402px;height:16px;line-height:16px;">-1.08</div>
<div class="n " style="left:-11px;width:60px;text-align:right;top:421px;height:16px;line-height:16px;">130.20</div>
<div class="n " style="left:42px;width:60px;text-align:right;top:421px;height:16px;line-height:16px;">24.27</div>
<div class="n " style="left:95px;width:60px;text-align:right;top:421px;height:16px;line-height:16px;">-24.08</div>
<div class="n " style="left:148px;width:60px;text-align:right;top:421px;height:16px;line-height:16px;">-1.07</div>
</div>
<svg style="left:965px;top:456px" width="9" height="6"><path d="M0.5 5 L4.5 0.8 L8.5 5 Z" fill="#6b7894"/></svg>
<svg style="left:965px;top:891px" width="9" height="6"><path d="M0.5 0.8 L4.5 5 L8.5 0.8 Z" fill="#6b7894"/></svg>
<div style="left:965px;top:702px;width:10px;height:18px;background:#8893ad;"></div>
<div style="left:12px;top:915px;width:968px;height:24px;background:#d1d7e6;"></div>
<div class="t" style="left:19.5px;top:919.2px;line-height:16px;height:16px;font-size:12px;">Trade Analysis</div>
<div style="left:105px;top:916px;width:150px;height:20px;background:#fff;border:1px solid #9aa6be;"></div>
<div class="t" style="left:110px;top:918.6px;line-height:16px;height:16px;font-size:12px;">Combined</div>
<svg style="left:242px;top:924px" width="8" height="5"><path d="M0.5 0.5 H7.5 L4 4.5 Z" fill="#5a6784"/></svg>
<div style="left:263px;top:916px;width:80px;height:20px;background:#fff;border:1px solid #9aa6be;"></div>
<div class="t" style="left:268px;top:918.6px;line-height:16px;height:16px;font-size:12px;">Auto</div>
<svg style="left:330px;top:924px" width="8" height="5"><path d="M0.5 0.5 H7.5 L4 4.5 Z" fill="#5a6784"/></svg>
<div style="left:836px;top:919.5px;width:13px;height:13px;background:#fff;border:1px solid #8a93a8;"></div>
<div class="t" style="left:853px;top:918.3px;line-height:16px;height:16px;font-size:12px;letter-spacing:0.35px;">Ignore Today's Trades</div>
<div style="left:13px;top:939px;width:967px;height:61px;background:#fff;border:1px solid #a9b3c9;border-bottom:none;"></div>
<div style="left:14px;top:940px;width:965px;height:20px;background:#f7f8fc;"></div>
<div style="left:14px;top:960px;width:965px;height:1px;background:#d3d8e5;"></div>
<div style="left:14px;top:979px;width:965px;height:1px;background:#d3d8e5;"></div>
<div style="left:14px;top:998px;width:965px;height:1px;background:#d3d8e5;"></div>
<div style="left:13px;top:999px;width:967px;height:1px;background:#a9b3c9;"></div>
<div style="left:87px;top:940px;width:1px;height:60px;background:#d3d8e5;"></div>
<div style="left:161px;top:940px;width:1px;height:60px;background:#d3d8e5;"></div>
<div style="left:235px;top:940px;width:1px;height:60px;background:#d3d8e5;"></div>
<div style="left:309px;top:940px;width:1px;height:60px;background:#d3d8e5;"></div>
<div style="left:383px;top:940px;width:1px;height:60px;background:#d3d8e5;"></div>
<div style="left:457px;top:940px;width:1px;height:60px;background:#d3d8e5;"></div>
<div style="left:531px;top:940px;width:1px;height:60px;background:#d3d8e5;"></div>
<div style="left:605px;top:940px;width:1px;height:60px;background:#d3d8e5;"></div>
<div style="left:679px;top:940px;width:1px;height:60px;background:#d3d8e5;"></div>
<div style="left:753px;top:940px;width:1px;height:60px;background:#d3d8e5;"></div>
<div style="left:827px;top:940px;width:1px;height:60px;background:#d3d8e5;"></div>
<div style="left:901px;top:940px;width:1px;height:60px;background:#d3d8e5;"></div>
<div class="t" style="left:13.5px;width:74px;text-align:center;top:942.3px;line-height:16px;height:16px;font-size:11.4px;">Analysis</div>
<div class="t" style="left:87.5px;width:74px;text-align:center;top:942.3px;line-height:16px;height:16px;font-size:11.4px;">Margin</div>
<div class="t" style="left:161.5px;width:74px;text-align:center;top:942.3px;line-height:16px;height:16px;font-size:11.4px;">Cost</div>
<div class="t" style="left:235.5px;width:74px;text-align:center;top:942.3px;line-height:16px;height:16px;font-size:11.4px;">Curr Cost</div>
<div class="t" style="left:309.5px;width:74px;text-align:center;top:942.3px;line-height:16px;height:16px;font-size:11.4px;">Commission</div>
<div class="t" style="left:383.5px;width:74px;text-align:center;top:942.3px;line-height:16px;height:16px;font-size:11.4px;">PnL</div>
<div class="t" style="left:457.5px;width:74px;text-align:center;top:942.3px;line-height:16px;height:16px;font-size:11.4px;">PnL%</div>
<div class="t" style="left:531.5px;width:74px;text-align:center;top:942.3px;line-height:16px;height:16px;font-size:11.4px;">Delta</div>
<div class="t" style="left:605.5px;width:74px;text-align:center;top:942.3px;line-height:16px;height:16px;font-size:11.4px;">Gamma</div>
<div class="t" style="left:679.5px;width:74px;text-align:center;top:942.3px;line-height:16px;height:16px;font-size:11.4px;">Theta</div>
<div class="t" style="left:753.5px;width:74px;text-align:center;top:942.3px;line-height:16px;height:16px;font-size:11.4px;">Vega</div>
<div class="t" style="left:827.5px;width:74px;text-align:center;top:942.3px;line-height:16px;height:16px;font-size:11.4px;">T/D</div>
<div class="t" style="left:901.5px;width:78px;text-align:center;top:942.3px;line-height:16px;height:16px;font-size:11.4px;">Plot</div>
<div class="n " style="left:88px;width:70px;text-align:right;top:963.0px;line-height:16px;height:16px;">107,614.50</div>
<div class="n " style="left:162px;width:70px;text-align:right;top:963.0px;line-height:16px;height:16px;">702.90</div>
<div class="n " style="left:236px;width:70px;text-align:right;top:963.0px;line-height:16px;height:16px;">-2,540.00</div>
<div class="n " style="left:310px;width:70px;text-align:right;top:963.0px;line-height:16px;height:16px;">2.10</div>
<div class="n r" style="left:384px;width:70px;text-align:right;top:963.0px;line-height:16px;height:16px;">-1,837.10</div>
<div class="n r" style="left:458px;width:70px;text-align:right;top:963.0px;line-height:16px;height:16px;">-1.71%</div>
<div class="n " style="left:532px;width:70px;text-align:right;top:963.0px;line-height:16px;height:16px;">-54.16</div>
<div class="n " style="left:606px;width:70px;text-align:right;top:963.0px;line-height:16px;height:16px;">-0.03</div>
<div class="n " style="left:680px;width:70px;text-align:right;top:963.0px;line-height:16px;height:16px;">93.26</div>
<div class="n " style="left:754px;width:70px;text-align:right;top:963.0px;line-height:16px;height:16px;">-534.02</div>
<div class="n " style="left:828px;width:70px;text-align:right;top:963.0px;line-height:16px;height:16px;">1.7</div>
<div class="n " style="left:532px;width:70px;text-align:right;top:982.0px;line-height:16px;height:16px;">0.00</div>
<div class="n " style="left:606px;width:70px;text-align:right;top:982.0px;line-height:16px;height:16px;">0.00</div>
<div class="n " style="left:680px;width:70px;text-align:right;top:982.0px;line-height:16px;height:16px;">0.00</div>
<div class="n " style="left:754px;width:70px;text-align:right;top:982.0px;line-height:16px;height:16px;">0.00</div>
<div class="n " style="left:828px;width:70px;text-align:right;top:982.0px;line-height:16px;height:16px;">0</div>
<div class="t" style="left:32px;top:963.0px;line-height:16px;height:16px;color:#1a72e0;font-size:12px;">Position</div>
<div class="t" style="left:32px;top:982.0px;line-height:16px;height:16px;color:#0d8a22;font-size:12px;">Model</div>
<svg style="left:16px;top:965px" width="10" height="10"><rect x="0.5" y="0.5" width="8" height="8" fill="#fff" stroke="#555"/><path d="M2 4.5 H7 M4.5 2 V7" stroke="#333"/></svg>
<svg style="left:16px;top:984px" width="10" height="10"><rect x="0.5" y="0.5" width="8" height="8" fill="#fff" stroke="#c2c2c2"/><path d="M2 4.5 H7 M4.5 2 V7" stroke="#c2c2c2"/></svg>
<svg style="left:934px;top:963.0px" width="14" height="14"><rect x="0.5" y="0.5" width="12" height="12" fill="#fff" stroke="#8a8f9c"/><path d="M3 6.8 L5.5 9.6 L10.2 3" stroke="#6a6f7c" stroke-width="1.3" fill="none"/></svg>
<svg style="left:934px;top:982.5px" width="14" height="14"><rect x="0.5" y="0.5" width="12" height="12" fill="#fff" stroke="#8a8f9c"/><path d="M3 6.8 L5.5 9.6 L10.2 3" stroke="#6a6f7c" stroke-width="1.3" fill="none"/></svg>
<svg style="left:984px;top:574px" width="7" height="19" shape-rendering="crispEdges"><g fill="#e9ecf5"><rect x="1" y="1" width="1" height="1"/><rect x="5" y="1" width="1" height="1"/><rect x="1" y="5" width="1" height="1"/><rect x="5" y="5" width="1" height="1"/><rect x="1" y="9" width="1" height="1"/><rect x="5" y="9" width="1" height="1"/><rect x="1" y="13" width="1" height="1"/><rect x="5" y="13" width="1" height="1"/><rect x="1" y="17" width="1" height="1"/><rect x="5" y="17" width="1" height="1"/><rect x="3" y="3" width="1" height="1"/><rect x="3" y="7" width="1" height="1"/><rect x="3" y="11" width="1" height="1"/><rect x="3" y="15" width="1" height="1"/></g><g fill="#66738f"><rect x="0" y="0" width="1" height="1"/><rect x="4" y="0" width="1" height="1"/><rect x="0" y="4" width="1" height="1"/><rect x="4" y="4" width="1" height="1"/><rect x="0" y="8" width="1" height="1"/><rect x="4" y="8" width="1" height="1"/><rect x="0" y="12" width="1" height="1"/><rect x="4" y="12" width="1" height="1"/><rect x="0" y="16" width="1" height="1"/><rect x="4" y="16" width="1" height="1"/><rect x="2" y="2" width="1" height="1"/><rect x="2" y="6" width="1" height="1"/><rect x="2" y="10" width="1" height="1"/><rect x="2" y="14" width="1" height="1"/></g></svg>
<div style="left:992px;top:163px;width:915px;height:837px;background:#d6dbe9;border-left:1px solid #aab4ca;border-top:1px solid #cdd3e2;border-right:1px solid #a3adc4;"></div>
<div style="left:1904px;top:191px;width:1px;height:809px;background:#a3adc4;"></div>
<div style="left:993px;top:191px;width:911px;height:1px;background:#a3adc4;"></div>
<div style="left:993px;top:165px;width:76px;height:27px;background:#d6dbe9;border:1px solid #a3adc4;border-bottom:none;border-left:none;"></div>
<div class="t" style="left:1003.7px;top:170.0px;line-height:16px;height:16px;font-size:12px;letter-spacing:-0.20px;">Risk Chart</div>
<div style="left:1068px;top:166px;width:82px;height:26px;background:#cfd5e6;border:1px solid #a3adc4;border-left:1px solid #a3adc4;"></div>
<div class="t" style="left:1078.7px;top:170.0px;line-height:16px;height:16px;font-size:12px;letter-spacing:-0.00px;">Price Chart</div>
<div style="left:1149px;top:166px;width:125px;height:26px;background:#cfd5e6;border:1px solid #a3adc4;border-left:1px solid #a3adc4;"></div>
<div class="t" style="left:1159.7px;top:170.0px;line-height:16px;height:16px;font-size:12px;letter-spacing:0.04px;">Movement Analysis</div>
<div style="left:1273px;top:166px;width:68px;height:26px;background:#cfd5e6;border:1px solid #a3adc4;border-left:1px solid #a3adc4;"></div>
<div class="t" style="left:1284.6px;top:170.0px;line-height:16px;height:16px;font-size:12px;letter-spacing:0.20px;">Volatility</div>
<div style="left:1340px;top:166px;width:163px;height:26px;background:#cfd5e6;border:1px solid #a3adc4;border-left:1px solid #a3adc4;"></div>
<div class="t" style="left:1351.7px;top:170.0px;line-height:16px;height:16px;font-size:12px;letter-spacing:0.05px;">Statistics &amp; Fundamentals</div>
<div style="left:993px;top:192px;width:911px;height:25px;background:#d6dbe9;"></div>
<div class="t" style="left:999px;top:196.7px;line-height:16px;height:16px;font-size:12px;letter-spacing:0.35px;">Vol Adjust</div>
<div style="left:1060px;top:194px;width:53px;height:20px;background:#fff;border:1px solid #9aa6be;"></div>
<div class="n" style="left:1074px;width:20px;text-align:right;top:196.8px;line-height:16px;height:16px;">0</div>
<svg style="left:1100px;top:197px" width="9" height="15"><path d="M0.5 5 L4.5 0.8 L8.5 5 Z M0.5 10 L4.5 14.2 L8.5 10 Z" fill="#5a6784"/></svg>
<div class="t" style="left:1657.8px;top:196.7px;line-height:16px;height:16px;font-size:12px;letter-spacing:0.16px;">Projection</div>
<div style="left:1718px;top:194px;width:180px;height:21px;background:#fff;border:1px solid #9aa6be;"></div>
<div class="t" style="left:1721.0px;top:197.0px;line-height:16px;height:16px;font-size:12px;letter-spacing:0.62px;color:#000;">01/04/2026</div>
<svg style="left:1796px;top:203px" width="8" height="5"><path d="M0.2 0.3 H7 L3.6 4 Z" fill="#7f8aa6"/></svg>
<div class="t" style="left:1813.4px;top:197.0px;line-height:16px;height:16px;font-size:12px;letter-spacing:0.43px;color:#000;">T+0</div>
<div class="t" style="left:1842.9px;top:197.0px;line-height:16px;height:16px;font-size:12px;letter-spacing:-0.04px;color:#000;">2Ln</div>
<svg style="left:1870px;top:199px" width="24" height="12"><path d="M6.6 1.6 L1.6 5.8 L6.6 10 Z M17 1.6 L22 5.8 L17 10 Z" fill="#15203a"/></svg>
<div style="left:993px;top:217px;width:911px;height:757px;background:#fff;"></div>
<div style="left:993px;top:974px;width:911px;height:25px;background:#293955;"></div>
<div style="left:993px;top:999px;width:911px;height:1px;background:#a3adc4;"></div>
<div class="t" style="left:1731px;top:978.8px;line-height:16px;height:16px;color:#fff;font-size:12.6px;">96%</div>
<svg style="left:1764px;top:980px" width="134" height="14"><path d="M4 6.5 H11" stroke="#e8ebf3" stroke-width="1"/><path d="M18 6.5 H60" stroke="#f3e4a0" stroke-width="1.2"/><rect x="60.6" y="2" width="3.4" height="9" fill="#f8eab0"/><path d="M66.5 3 V10" stroke="#e8ebf3" stroke-width="1"/><path d="M67 6.5 H115" stroke="#e8ebf3" stroke-width="1"/><path d="M122 6.5 H129 M125.5 3 V10" stroke="#e8ebf3" stroke-width="1"/></svg>
<svg style="left:0;top:0" width="1908" height="1000" font-family="Liberation Sans, sans-serif"><rect x="1348" y="236" width="142" height="529" fill="#92cbdb" shape-rendering="crispEdges"/><rect x="1383" y="236" width="71" height="529" fill="#4f81bd" shape-rendering="crispEdges"/><rect x="1043.5" y="235" width="811.0" height="1" fill="#d8d8d8" shape-rendering="crispEdges"/><rect x="1043.5" y="268" width="811.0" height="1" fill="#d8d8d8" shape-rendering="crispEdges"/><rect x="1043.5" y="301" width="811.0" height="1" fill="#d8d8d8" shape-rendering="crispEdges"/><rect x="1043.5" y="334" width="811.0" height="1" fill="#d8d8d8" shape-rendering="crispEdges"/><rect x="1043.5" y="367" width="811.0" height="1" fill="#d8d8d8" shape-rendering="crispEdges"/><rect x="1043.5" y="400" width="811.0" height="1" fill="#d8d8d8" shape-rendering="crispEdges"/><rect x="1043.5" y="433" width="811.0" height="1" fill="#d8d8d8" shape-rendering="crispEdges"/><rect x="1043.5" y="466" width="811.0" height="1" fill="#d8d8d8" shape-rendering="crispEdges"/><rect x="1043.5" y="500" width="811.0" height="1" fill="#d8d8d8" shape-rendering="crispEdges"/><rect x="1043.5" y="533" width="811.0" height="1" fill="#d8d8d8" shape-rendering="crispEdges"/><rect x="1043.5" y="566" width="811.0" height="1" fill="#d8d8d8" shape-rendering="crispEdges"/><rect x="1043.5" y="599" width="811.0" height="1" fill="#d8d8d8" shape-rendering="crispEdges"/><rect x="1043.5" y="632" width="811.0" height="1" fill="#d8d8d8" shape-rendering="crispEdges"/><rect x="1043.5" y="665" width="811.0" height="1" fill="#d8d8d8" shape-rendering="crispEdges"/><rect x="1043.5" y="698" width="811.0" height="1" fill="#d8d8d8" shape-rendering="crispEdges"/><rect x="1043.5" y="731" width="811.0" height="1" fill="#d8d8d8" shape-rendering="crispEdges"/><rect x="1043.5" y="764" width="811.0" height="1" fill="#d8d8d8" shape-rendering="crispEdges"/><rect x="1054" y="231" width="1" height="539" fill="#d8d8d8" shape-rendering="crispEdges"/><rect x="1132" y="231" width="1" height="539" fill="#d8d8d8" shape-rendering="crispEdges"/><rect x="1211" y="231" width="1" height="539" fill="#d8d8d8" shape-rendering="crispEdges"/><rect x="1289" y="231" width="1" height="539" fill="#d8d8d8" shape-rendering="crispEdges"/><rect x="1368" y="231" width="1" height="539" fill="#d8d8d8" shape-rendering="crispEdges"/><rect x="1446" y="231" width="1" height="539" fill="#d8d8d8" shape-rendering="crispEdges"/><rect x="1525" y="231" width="1" height="539" fill="#d8d8d8" shape-rendering="crispEdges"/><rect x="1603" y="231" width="1" height="539" fill="#d8d8d8" shape-rendering="crispEdges"/><rect x="1682" y="231" width="1" height="539" fill="#d8d8d8" shape-rendering="crispEdges"/><rect x="1760" y="231" width="1" height="539" fill="#d8d8d8" shape-rendering="crispEdges"/><rect x="1839" y="231" width="1" height="539" fill="#d8d8d8" shape-rendering="crispEdges"/><rect x="1048" y="231" width="1" height="534" fill="#d8d8d8" shape-rendering="crispEdges"/><rect x="1849" y="231" width="1" height="534" fill="#d8d8d8" shape-rendering="crispEdges"/><text x="1359.6" y="277.7" transform="rotate(-90 1359.6 277.7)" font-size="10.67" fill="#4f81bd">6349.60</text><text x="1394.7" y="277.7" transform="rotate(-90 1394.7 277.7)" font-size="10.67" fill="#8db8de">6439.06</text><text x="1452.4" y="277.7" transform="rotate(-90 1452.4 277.7)" font-size="10.67" fill="#8db8de">6617.98</text><text x="1488.5" y="277.7" transform="rotate(-90 1488.5 277.7)" font-size="10.67" fill="#4f81bd">6707.44</text><rect x="1048.5" y="466" width="805.5" height="1" fill="#000" shape-rendering="crispEdges"/><path d="M1553.5 240 V764" stroke="#800088" stroke-width="1.15" stroke-dasharray="5 5.2"/><text x="1552.2" y="762.6" transform="rotate(-90 1552.2 762.6)" font-size="10.67" fill="#8c1a9c">6870.47</text><polygon points="1336,433.5 1376.7,448.7 1376.7,458.5 1336,441.5" fill="rgba(247,150,70,0.4)"/><path d="M1048.7 301.91 L1054.7 304.90 L1060.7 307.93 L1066.7 310.99 L1072.7 314.09 L1078.7 317.21 L1084.7 320.34 L1090.7 323.48 L1096.7 326.63 L1102.7 329.77 L1108.7 332.92 L1114.7 336.05 L1120.7 339.17 L1126.7 342.28 L1132.7 345.37 L1138.7 348.44 L1144.7 351.48 L1150.7 354.50 L1156.7 357.48 L1162.7 360.44 L1168.7 363.37 L1174.7 366.26 L1180.7 369.12 L1186.7 371.95 L1192.7 374.74 L1198.7 377.49 L1204.7 380.21 L1210.7 382.89 L1216.7 385.54 L1222.7 388.15 L1228.7 390.72 L1234.7 393.26 L1240.7 395.77 L1246.7 398.25 L1252.7 400.69 L1258.7 403.10 L1264.7 405.48 L1270.7 407.84 L1276.7 410.17 L1282.7 412.47 L1288.7 414.75 L1294.7 417.01 L1300.7 419.24 L1306.7 421.46 L1312.7 423.67 L1318.7 425.85 L1324.7 428.03 L1330.7 430.20 L1336.7 432.36 L1342.7 434.51 L1348.7 436.65 L1354.7 438.80 L1360.7 440.94 L1366.7 443.09 L1372.7 445.24 L1378.7 447.40 L1384.7 449.57 L1390.7 451.74 L1396.7 453.93 L1402.7 456.14 L1408.7 458.36 L1414.7 460.60 L1420.7 462.86 L1426.7 465.14 L1432.7 467.45 L1438.7 469.78 L1444.7 472.14 L1450.7 474.53 L1456.7 476.96 L1462.7 479.41 L1468.7 481.90 L1474.7 484.43 L1480.7 487.00 L1486.7 489.60 L1492.7 492.24 L1498.7 494.93 L1504.7 497.66 L1510.7 500.43 L1516.7 503.25 L1522.7 506.11 L1528.7 509.02 L1534.7 511.98 L1540.7 514.99 L1546.7 518.04 L1552.7 521.15 L1558.7 524.30 L1564.7 527.50 L1570.7 530.76 L1576.7 534.07 L1582.7 537.42 L1588.7 540.83 L1594.7 544.29 L1600.7 547.81 L1606.7 551.37 L1612.7 554.98 L1618.7 558.64 L1624.7 562.36 L1630.7 566.12 L1636.7 569.93 L1642.7 573.79 L1648.7 577.70 L1654.7 581.66 L1660.7 585.66 L1666.7 589.71 L1672.7 593.80 L1678.7 597.94 L1684.7 602.11 L1690.7 606.33 L1696.7 610.59 L1702.7 614.89 L1708.7 619.23 L1714.7 623.60 L1720.7 628.01 L1726.7 632.45 L1732.7 636.93 L1738.7 641.43 L1744.7 645.97 L1750.7 650.53 L1756.7 655.12 L1762.7 659.74 L1768.7 664.38 L1774.7 669.04 L1780.7 673.73 L1786.7 678.43 L1792.7 683.15 L1798.7 687.89 L1804.7 692.65 L1810.7 697.41 L1816.7 702.19 L1822.7 706.99 L1828.7 711.79 L1834.7 716.60 L1840.7 721.42 L1846.7 726.25 L1849.3 728.34" stroke="#ff3434" stroke-width="1.05" fill="none"/><path d="M1048.7 321.20 L1054.7 323.68 L1060.7 326.15 L1066.7 328.62 L1072.7 331.08 L1078.7 333.54 L1084.7 335.99 L1090.7 338.44 L1096.7 340.88 L1102.7 343.31 L1108.7 345.74 L1114.7 348.17 L1120.7 350.59 L1126.7 353.00 L1132.7 355.41 L1138.7 357.81 L1144.7 360.21 L1150.7 362.60 L1156.7 364.99 L1162.7 367.38 L1168.7 369.76 L1174.7 372.14 L1180.7 374.52 L1186.7 376.90 L1192.7 379.27 L1198.7 381.64 L1204.7 384.01 L1210.7 386.39 L1216.7 388.76 L1222.7 391.13 L1228.7 393.50 L1234.7 395.88 L1240.7 398.25 L1246.7 400.63 L1252.7 403.01 L1258.7 405.40 L1264.7 407.79 L1270.7 410.19 L1276.7 412.59 L1278.8 413.43" stroke="#00e000" stroke-width="1.3" fill="none"/><path d="M1278.8 413.43 L1284.8 415.85 L1290.8 418.26 L1296.8 420.69 L1302.8 423.13 L1308.8 425.57 L1314.8 428.03 L1320.8 430.49 L1326.8 432.97 L1332.8 435.46 L1338.8 437.96 L1344.8 440.48 L1350.8 443.01 L1356.8 445.56 L1362.8 448.12 L1368.8 450.69 L1374.8 453.29 L1380.8 455.90 L1386.8 458.53 L1392.8 461.18 L1398.8 463.85 L1404.8 466.54 L1410.8 469.25 L1416.8 471.99 L1422.8 474.74 L1428.8 477.52 L1434.8 480.32 L1440.8 483.15 L1446.8 486.00 L1452.8 488.88 L1458.8 491.78 L1464.8 494.71 L1470.8 497.66 L1476.8 500.65 L1481.7 503.11" stroke="#6a9af0" stroke-width="1.2" fill="none"/><path d="M1481.7 503.11 L1487.7 506.14 L1493.7 509.21 L1499.7 512.30 L1505.7 515.42 L1511.7 518.58 L1517.7 521.76 L1523.7 524.98 L1529.7 528.23 L1535.7 531.51 L1541.7 534.82 L1547.7 538.16 L1553.7 541.54 L1559.7 544.95 L1565.7 548.39 L1571.7 551.87 L1577.7 555.38 L1583.7 558.92 L1589.7 562.50 L1595.7 566.11 L1601.7 569.76 L1607.7 573.43 L1613.7 577.14 L1619.7 580.89 L1625.7 584.67 L1631.7 588.48 L1637.7 592.33 L1643.7 596.20 L1649.7 600.11 L1655.7 604.06 L1661.7 608.03 L1667.7 612.04 L1673.7 616.08 L1679.7 620.15 L1685.7 624.24 L1691.7 628.37 L1697.7 632.53 L1703.7 636.71 L1709.7 640.93 L1715.7 645.17 L1721.7 649.44 L1727.7 653.73 L1733.7 658.04 L1739.7 662.38 L1745.7 666.75 L1751.7 671.13 L1757.7 675.53 L1763.7 679.96 L1769.7 684.40 L1775.7 688.86 L1781.7 693.33 L1787.7 697.82 L1793.7 702.32 L1799.7 706.84 L1805.7 711.36 L1811.7 715.89 L1817.7 720.42 L1823.7 724.97 L1829.7 729.51 L1835.7 734.06 L1841.7 738.60 L1847.7 743.14 L1849.3 744.36" stroke="#ff0a0a" stroke-width="1.15" fill="none"/><path d="M1048.7 267.4 L1281.3 463.8 L1552 463.8 L1849.3 715.2" stroke="#3a3ac4" stroke-width="2.2" fill="none" stroke-linejoin="miter"/><circle cx="1418.3" cy="473.5" r="4" fill="#ff0000" stroke="#000" stroke-width="1"/></svg>
<div class="c" style="left:1024.3px;width:60px;text-align:center;top:219.0px;line-height:13px;height:13px;color:#222;">-14.2%</div>
<div class="c" style="left:1102.81px;width:60px;text-align:center;top:219.0px;line-height:13px;height:13px;color:#222;">-11.2%</div>
<div class="c" style="left:1181.32px;width:60px;text-align:center;top:219.0px;line-height:13px;height:13px;color:#222;">-8.1%</div>
<div class="c" style="left:1259.83px;width:60px;text-align:center;top:219.0px;line-height:13px;height:13px;color:#222;">-5.0%</div>
<div class="c" style="left:1338.34px;width:60px;text-align:center;top:219.0px;line-height:13px;height:13px;color:#222;">-2.0%</div>
<div class="c" style="left:1416.85px;width:60px;text-align:center;top:219.0px;line-height:13px;height:13px;color:#222;">1.1%</div>
<div class="c" style="left:1495.36px;width:60px;text-align:center;top:219.0px;line-height:13px;height:13px;color:#222;">4.2%</div>
<div class="c" style="left:1573.87px;width:60px;text-align:center;top:219.0px;line-height:13px;height:13px;color:#222;">7.2%</div>
<div class="c" style="left:1652.38px;width:60px;text-align:center;top:219.0px;line-height:13px;height:13px;color:#222;">10.3%</div>
<div class="c" style="left:1730.8899999999999px;width:60px;text-align:center;top:219.0px;line-height:13px;height:13px;color:#222;">13.3%</div>
<div class="c" style="left:1809.4px;width:60px;text-align:center;top:219.0px;line-height:13px;height:13px;color:#222;">16.4%</div>
<div style="left:1403px;top:217px;width:30px;height:14px;background:#e9f1fb;border:1px solid #3c4a6a;"></div>
<div class="c" style="left:1398.5px;width:40px;text-align:center;top:219.1px;line-height:13px;height:13px;color:#222;">0.0%</div>
<div class="c" style="left:1024.8px;width:60px;text-align:center;top:770.5px;line-height:13px;height:13px;color:#222;">5600</div>
<div class="c" style="left:1103.31px;width:60px;text-align:center;top:770.5px;line-height:13px;height:13px;color:#222;">5800</div>
<div class="c" style="left:1181.82px;width:60px;text-align:center;top:770.5px;line-height:13px;height:13px;color:#222;">6000</div>
<div class="c" style="left:1260.33px;width:60px;text-align:center;top:770.5px;line-height:13px;height:13px;color:#222;">6200</div>
<div class="c" style="left:1338.84px;width:60px;text-align:center;top:770.5px;line-height:13px;height:13px;color:#222;">6400</div>
<div class="c" style="left:1417.35px;width:60px;text-align:center;top:770.5px;line-height:13px;height:13px;color:#222;">6600</div>
<div class="c" style="left:1495.86px;width:60px;text-align:center;top:770.5px;line-height:13px;height:13px;color:#222;">6800</div>
<div class="c" style="left:1574.37px;width:60px;text-align:center;top:770.5px;line-height:13px;height:13px;color:#222;">7000</div>
<div class="c" style="left:1652.88px;width:60px;text-align:center;top:770.5px;line-height:13px;height:13px;color:#222;">7200</div>
<div class="c" style="left:1731.3899999999999px;width:60px;text-align:center;top:770.5px;line-height:13px;height:13px;color:#222;">7400</div>
<div class="c" style="left:1809.9px;width:60px;text-align:center;top:770.5px;line-height:13px;height:13px;color:#222;">7600</div>
<div class="c" style="left:991px;width:50px;text-align:right;top:229.9px;line-height:13px;height:13px;color:#222;">65%</div>
<div class="c" style="left:1857.5px;top:229.9px;line-height:13px;height:13px;color:#222;">70,000</div>
<div class="c" style="left:991px;width:50px;text-align:right;top:262.9625px;line-height:13px;height:13px;color:#222;">56%</div>
<div class="c" style="left:1857.5px;top:262.9625px;line-height:13px;height:13px;color:#222;">60,000</div>
<div class="c" style="left:991px;width:50px;text-align:right;top:296.025px;line-height:13px;height:13px;color:#222;">46%</div>
<div class="c" style="left:1857.5px;top:296.025px;line-height:13px;height:13px;color:#222;">50,000</div>
<div class="c" style="left:991px;width:50px;text-align:right;top:329.0875px;line-height:13px;height:13px;color:#222;">37%</div>
<div class="c" style="left:1857.5px;top:329.0875px;line-height:13px;height:13px;color:#222;">40,000</div>
<div class="c" style="left:991px;width:50px;text-align:right;top:362.15px;line-height:13px;height:13px;color:#222;">28%</div>
<div class="c" style="left:1857.5px;top:362.15px;line-height:13px;height:13px;color:#222;">30,000</div>
<div class="c" style="left:991px;width:50px;text-align:right;top:395.2125px;line-height:13px;height:13px;color:#222;">19%</div>
<div class="c" style="left:1857.5px;top:395.2125px;line-height:13px;height:13px;color:#222;">20,000</div>
<div class="c" style="left:991px;width:50px;text-align:right;top:428.275px;line-height:13px;height:13px;color:#222;">9%</div>
<div class="c" style="left:1857.5px;top:428.275px;line-height:13px;height:13px;color:#222;">10,000</div>
<div class="c" style="left:991px;width:50px;text-align:right;top:461.3375px;line-height:13px;height:13px;color:#222;">0%</div>
<div class="c" style="left:1857.5px;top:461.3375px;line-height:13px;height:13px;color:#222;">0</div>
<div class="c" style="left:991px;width:50px;text-align:right;top:494.4px;line-height:13px;height:13px;color:#222;">-9%</div>
<div class="c" style="left:1857.5px;top:494.4px;line-height:13px;height:13px;color:#222;">-10,000</div>
<div class="c" style="left:991px;width:50px;text-align:right;top:527.4625px;line-height:13px;height:13px;color:#222;">-19%</div>
<div class="c" style="left:1857.5px;top:527.4625px;line-height:13px;height:13px;color:#222;">-20,000</div>
<div class="c" style="left:991px;width:50px;text-align:right;top:560.525px;line-height:13px;height:13px;color:#222;">-28%</div>
<div class="c" style="left:1857.5px;top:560.525px;line-height:13px;height:13px;color:#222;">-30,000</div>
<div class="c" style="left:991px;width:50px;text-align:right;top:593.5875px;line-height:13px;height:13px;color:#222;">-37%</div>
<div class="c" style="left:1857.5px;top:593.5875px;line-height:13px;height:13px;color:#222;">-40,000</div>
<div class="c" style="left:991px;width:50px;text-align:right;top:626.65px;line-height:13px;height:13px;color:#222;">-46%</div>
<div class="c" style="left:1857.5px;top:626.65px;line-height:13px;height:13px;color:#222;">-50,000</div>
<div class="c" style="left:991px;width:50px;text-align:right;top:659.7125px;line-height:13px;height:13px;color:#222;">-56%</div>
<div class="c" style="left:1857.5px;top:659.7125px;line-height:13px;height:13px;color:#222;">-60,000</div>
<div class="c" style="left:991px;width:50px;text-align:right;top:692.775px;line-height:13px;height:13px;color:#222;">-65%</div>
<div class="c" style="left:1857.5px;top:692.775px;line-height:13px;height:13px;color:#222;">-70,000</div>
<div class="c" style="left:991px;width:50px;text-align:right;top:725.8375px;line-height:13px;height:13px;color:#222;">-74%</div>
<div class="c" style="left:1857.5px;top:725.8375px;line-height:13px;height:13px;color:#222;">-80,000</div>
<div class="c" style="left:991px;width:50px;text-align:right;top:758.9px;line-height:13px;height:13px;color:#222;">-84%</div>
<div class="c" style="left:1857.5px;top:758.9px;line-height:13px;height:13px;color:#222;">-90,000</div>
<div style="left:999px;top:466px;width:45px;height:14px;background:#cc0000;"></div>
<div class="c" style="left:1001px;width:40px;text-align:right;top:468.0px;line-height:13px;height:13px;color:#fff;">-2%</div>
<div style="left:1854px;top:466px;width:47px;height:14px;background:#cc0000;"></div>
<div class="c" style="left:1857.5px;top:468.0px;line-height:13px;height:13px;color:#fff;">-1,837</div>
<div class="c" style="left:1285px;top:745.8px;line-height:13px;height:13px;color:#8c1a9c;">66.2%</div>
<div class="c" style="left:1686px;top:745.8px;line-height:13px;height:13px;color:#8c1a9c;">33.8%</div>
<div style="left:1053px;top:240px;width:168px;height:70.5px;background:rgba(232,238,248,0.88);border:1px solid #64748f;border-radius:6px;"></div>
<div style="left:1061px;top:248px;width:4px;height:13px;background:#f23a3a;"></div>
<div style="left:1061px;top:262px;width:4px;height:13px;background:#7f9fec;"></div>
<div style="left:1061px;top:276px;width:4px;height:13px;background:#7f9fec;"></div>
<div style="left:1061px;top:290px;width:4px;height:13px;background:#7f9fec;"></div>
<div class="c" style="left:1065.5px;top:248.5px;line-height:13px;height:13px;color:#404040;letter-spacing:0.15px;">-2.10 Realized PnL</div>
<div class="c" style="left:1065.5px;top:263.1px;line-height:13px;height:13px;color:#404040;letter-spacing:0.15px;word-spacing:0.7px;">+1 <span style="color:#4444ff">30jun. 6180 Put Δ</span></div>
<div class="c" style="left:1065.5px;top:277.1px;line-height:13px;height:13px;color:#404040;letter-spacing:0.15px;word-spacing:0.7px;">-1 <span style="color:#ff4444">30jun. 5210 Put Δ</span></div>
<div class="c" style="left:1065.5px;top:291.1px;line-height:13px;height:13px;color:#404040;letter-spacing:0.15px;word-spacing:0.7px;">-1 <span style="color:#ff4444">30jun. 6865 Call Δ</span></div>
<div class="c" style="left:1179.8px;top:263.1px;line-height:13px;height:13px;color:#4444ff;letter-spacing:0.15px;">-27.05</div>
<div class="c" style="left:1183.7px;top:277.1px;line-height:13px;height:13px;color:#ff4444;letter-spacing:0.15px;">-6.71</div>
<div class="c" style="left:1185.6px;top:291.1px;line-height:13px;height:13px;color:#ff4444;letter-spacing:0.15px;">33.83</div>
<div style="left:1710.5px;top:240px;width:137px;height:46px;background:rgba(232,238,248,0.88);border:1px solid #64748f;border-radius:6px;"></div>
<div class="c" style="left:1722px;top:246.7px;line-height:13px;height:13px;color:#444;font-weight:bold;letter-spacing:0.3px;">Comments</div>
<div class="c" style="left:1722px;top:265.8px;line-height:13px;height:13px;color:#555;letter-spacing:0.45px;">Trade Occurred Today</div>
<div style="left:1053px;top:703px;width:122px;height:56.5px;background:rgba(232,238,248,0.88);border:1px solid #64748f;border-radius:6px;"></div>
<div class="c" style="left:1061px;top:711.5px;line-height:13px;height:13px;color:#6d6ddc;letter-spacing:0.2px;">30/06/2026 (0)</div>
<div class="c" style="left:1061px;top:725.5px;line-height:13px;height:13px;color:#ff5e5e;letter-spacing:0.2px;">16/05/2026 (45) T+45</div>
<div class="c" style="left:1061px;top:739.5px;line-height:13px;height:13px;color:#8fb0f4;letter-spacing:0.2px;">01/04/2026 (90) T+0</div>
<div style="left:997px;top:785px;width:903.5px;height:185px;background:#e8eef8;border:1px solid #4d5d78;border-radius:6px;"></div>
<svg style="left:0;top:0" width="1908" height="1000" shape-rendering="crispEdges"><path d="M1049 813.5 H1850.4" stroke="#555a60" stroke-width="1"/><rect x="1049" y="808.1" width="45.8" height="5.4" fill="#5b7dff" stroke="#555a60" stroke-width="1"/><rect x="1094.8" y="809.3" width="78.1" height="4.2" fill="#5b7dff" stroke="#555a60" stroke-width="1"/><rect x="1172.9" y="810.5" width="78.7" height="3.0" fill="#5b7dff" stroke="#555a60" stroke-width="1"/><rect x="1251.6" y="811.7" width="78.0" height="1.8" fill="#5b7dff" stroke="#555a60" stroke-width="1"/><rect x="1486.2" y="813.5" width="79.1" height="2.2" fill="#f47c7c" stroke="#555a60" stroke-width="1"/><rect x="1565.3" y="813.5" width="78.3" height="3.9" fill="#f47c7c" stroke="#555a60" stroke-width="1"/><rect x="1643.6" y="813.5" width="78.8" height="5.8" fill="#f47c7c" stroke="#555a60" stroke-width="1"/><rect x="1722.4" y="813.5" width="78.6" height="7.9" fill="#f47c7c" stroke="#555a60" stroke-width="1"/><rect x="1801" y="813.5" width="49.4" height="10.2" fill="#f47c7c" stroke="#555a60" stroke-width="1"/><path d="M1049 855.6 H1850.4" stroke="#555a60" stroke-width="1"/><rect x="1049" y="855.6" width="45.8" height="5.3" fill="#f47c7c" stroke="#555a60" stroke-width="1"/><rect x="1094.8" y="855.6" width="78.1" height="5.2" fill="#f47c7c" stroke="#555a60" stroke-width="1"/><rect x="1172.9" y="855.6" width="78.7" height="5.1" fill="#f47c7c" stroke="#555a60" stroke-width="1"/><rect x="1251.6" y="855.6" width="78.0" height="5.1" fill="#f47c7c" stroke="#555a60" stroke-width="1"/><rect x="1329.6" y="855.6" width="78.4" height="5.4" fill="#f47c7c" stroke="#555a60" stroke-width="1"/><rect x="1408" y="855.6" width="78.2" height="6.1" fill="#f47c7c" stroke="#555a60" stroke-width="1"/><rect x="1486.2" y="855.6" width="79.1" height="6.9" fill="#f47c7c" stroke="#555a60" stroke-width="1"/><rect x="1565.3" y="855.6" width="78.3" height="7.8" fill="#f47c7c" stroke="#555a60" stroke-width="1"/><rect x="1643.6" y="855.6" width="78.8" height="8.7" fill="#f47c7c" stroke="#555a60" stroke-width="1"/><rect x="1722.4" y="855.6" width="78.6" height="9.4" fill="#f47c7c" stroke="#555a60" stroke-width="1"/><rect x="1801" y="855.6" width="49.4" height="9.9" fill="#f47c7c" stroke="#555a60" stroke-width="1"/><path d="M1049 887.7 H1850.4" stroke="#555a60" stroke-width="1"/><rect x="1094.8" y="885.5" width="78.1" height="2.2" fill="#5b7dff" stroke="#555a60" stroke-width="1"/><rect x="1251.6" y="887.7" width="78.0" height="2.4" fill="#f47c7c" stroke="#555a60" stroke-width="1"/><rect x="1329.6" y="887.7" width="78.4" height="4.9" fill="#f47c7c" stroke="#555a60" stroke-width="1"/><rect x="1408" y="887.7" width="78.2" height="9.4" fill="#f47c7c" stroke="#555a60" stroke-width="1"/><rect x="1486.2" y="887.7" width="79.1" height="9.4" fill="#f47c7c" stroke="#555a60" stroke-width="1"/><rect x="1565.3" y="887.7" width="78.3" height="9.4" fill="#f47c7c" stroke="#555a60" stroke-width="1"/><rect x="1643.6" y="887.7" width="78.8" height="9.4" fill="#f47c7c" stroke="#555a60" stroke-width="1"/><rect x="1722.4" y="887.7" width="78.6" height="7.1" fill="#f47c7c" stroke="#555a60" stroke-width="1"/><rect x="1801" y="887.7" width="49.4" height="4.7" fill="#f47c7c" stroke="#555a60" stroke-width="1"/><path d="M1049 919.4 H1850.4" stroke="#555a60" stroke-width="1"/><rect x="1049" y="911.6" width="45.8" height="7.8" fill="#5b7dff" stroke="#555a60" stroke-width="1"/><rect x="1094.8" y="913.8" width="78.1" height="5.6" fill="#5b7dff" stroke="#555a60" stroke-width="1"/><rect x="1172.9" y="915.0" width="78.7" height="4.4" fill="#5b7dff" stroke="#555a60" stroke-width="1"/><rect x="1251.6" y="914.9" width="78.0" height="4.5" fill="#5b7dff" stroke="#555a60" stroke-width="1"/><rect x="1329.6" y="913.7" width="78.4" height="5.7" fill="#5b7dff" stroke="#555a60" stroke-width="1"/><rect x="1408" y="912.0" width="78.2" height="7.4" fill="#5b7dff" stroke="#555a60" stroke-width="1"/><rect x="1486.2" y="910.5" width="79.1" height="8.9" fill="#5b7dff" stroke="#555a60" stroke-width="1"/><rect x="1565.3" y="909.7" width="78.3" height="9.7" fill="#5b7dff" stroke="#555a60" stroke-width="1"/><rect x="1643.6" y="909.7" width="78.8" height="9.7" fill="#5b7dff" stroke="#555a60" stroke-width="1"/><rect x="1722.4" y="910.3" width="78.6" height="9.1" fill="#5b7dff" stroke="#555a60" stroke-width="1"/><rect x="1801" y="911.2" width="49.4" height="8.2" fill="#5b7dff" stroke="#555a60" stroke-width="1"/><path d="M1049 951.3 H1850.4" stroke="#555a60" stroke-width="1"/><rect x="1049" y="951.3" width="45.8" height="2.2" fill="#f47c7c" stroke="#555a60" stroke-width="1"/><rect x="1251.6" y="951.3" width="78.0" height="1.7" fill="#f47c7c" stroke="#555a60" stroke-width="1"/><rect x="1329.6" y="951.3" width="78.4" height="4.3" fill="#f47c7c" stroke="#555a60" stroke-width="1"/><rect x="1408" y="951.3" width="78.2" height="7.2" fill="#f47c7c" stroke="#555a60" stroke-width="1"/><rect x="1486.2" y="951.3" width="79.1" height="9.2" fill="#f47c7c" stroke="#555a60" stroke-width="1"/><rect x="1565.3" y="951.3" width="78.3" height="9.9" fill="#f47c7c" stroke="#555a60" stroke-width="1"/><rect x="1643.6" y="951.3" width="78.8" height="9.3" fill="#f47c7c" stroke="#555a60" stroke-width="1"/><rect x="1722.4" y="951.3" width="78.6" height="7.7" fill="#f47c7c" stroke="#555a60" stroke-width="1"/><rect x="1801" y="951.3" width="49.4" height="5.8" fill="#f47c7c" stroke="#555a60" stroke-width="1"/></svg>
<div class="c" style="left:994.0px;width:60px;text-align:center;top:807.7px;line-height:13px;height:13px;color:#5a5a5a;">PnL</div>
<div class="c" style="left:1847.5px;width:60px;text-align:center;top:807.7px;line-height:13px;height:13px;color:#5a5a5a;">PnL</div>
<div class="c" style="left:994.0px;width:60px;text-align:center;top:849.8px;line-height:13px;height:13px;color:#5a5a5a;">Delta</div>
<div class="c" style="left:1847.5px;width:60px;text-align:center;top:849.8px;line-height:13px;height:13px;color:#5a5a5a;">Delta</div>
<div class="c" style="left:993.0px;width:60px;text-align:center;top:881.9px;line-height:13px;height:13px;color:#5a5a5a;">Gamma</div>
<div class="c" style="left:1847.5px;width:60px;text-align:center;top:881.9px;line-height:13px;height:13px;color:#5a5a5a;">Gamma</div>
<div class="c" style="left:994.0px;width:60px;text-align:center;top:913.5px;line-height:13px;height:13px;color:#5a5a5a;">Theta</div>
<div class="c" style="left:1847.5px;width:60px;text-align:center;top:913.5px;line-height:13px;height:13px;color:#5a5a5a;">Theta</div>
<div class="c" style="left:994.0px;width:60px;text-align:center;top:945.5px;line-height:13px;height:13px;color:#5a5a5a;">Vega</div>
<div class="c" style="left:1847.5px;width:60px;text-align:center;top:945.5px;line-height:13px;height:13px;color:#5a5a5a;">Vega</div>
<div class="c" style="left:1026.5px;width:60px;text-align:center;top:814.3px;line-height:12px;height:12px;color:#5f6cf0;">43417</div>
<div class="c" style="left:1026.5px;width:60px;text-align:center;top:824.3px;line-height:12px;height:12px;color:#5f6cf0;">40%</div>
<div class="c" style="left:1026.5px;width:60px;text-align:center;top:845.0px;line-height:12px;height:12px;color:#f25e5e;">-49.50</div>
<div class="c" style="left:1026.5px;width:60px;text-align:center;top:888.2px;line-height:12px;height:12px;color:#5f6cf0;">0.00</div>
<div class="c" style="left:1026.5px;width:60px;text-align:center;top:920.2px;line-height:12px;height:12px;color:#5f6cf0;">107.37</div>
<div class="c" style="left:1026.5px;width:60px;text-align:center;top:941.0px;line-height:12px;height:12px;color:#f25e5e;">-192.42</div>
<div class="c" style="left:1104.01px;width:60px;text-align:center;top:814.3px;line-height:12px;height:12px;color:#5f6cf0;">33623</div>
<div class="c" style="left:1104.01px;width:60px;text-align:center;top:824.3px;line-height:12px;height:12px;color:#5f6cf0;">31%</div>
<div class="c" style="left:1104.01px;width:60px;text-align:center;top:845.0px;line-height:12px;height:12px;color:#f25e5e;">-48.31</div>
<div class="c" style="left:1104.01px;width:60px;text-align:center;top:888.2px;line-height:12px;height:12px;color:#5f6cf0;">0.01</div>
<div class="c" style="left:1104.01px;width:60px;text-align:center;top:920.2px;line-height:12px;height:12px;color:#5f6cf0;">76.96</div>
<div class="c" style="left:1104.01px;width:60px;text-align:center;top:941.0px;line-height:12px;height:12px;color:#f25e5e;">-37.27</div>
<div class="c" style="left:1182.52px;width:60px;text-align:center;top:814.3px;line-height:12px;height:12px;color:#5f6cf0;">24094</div>
<div class="c" style="left:1182.52px;width:60px;text-align:center;top:824.3px;line-height:12px;height:12px;color:#5f6cf0;">22%</div>
<div class="c" style="left:1182.52px;width:60px;text-align:center;top:845.0px;line-height:12px;height:12px;color:#f25e5e;">-47.12</div>
<div class="c" style="left:1182.52px;width:60px;text-align:center;top:888.2px;line-height:12px;height:12px;color:#5f6cf0;">0.00</div>
<div class="c" style="left:1182.52px;width:60px;text-align:center;top:920.2px;line-height:12px;height:12px;color:#5f6cf0;">60.33</div>
<div class="c" style="left:1182.52px;width:60px;text-align:center;top:941.0px;line-height:12px;height:12px;color:#f25e5e;">-15.30</div>
<div class="c" style="left:1261.03px;width:60px;text-align:center;top:814.3px;line-height:12px;height:12px;color:#5f6cf0;">14663</div>
<div class="c" style="left:1261.03px;width:60px;text-align:center;top:824.3px;line-height:12px;height:12px;color:#5f6cf0;">14%</div>
<div class="c" style="left:1261.03px;width:60px;text-align:center;top:845.0px;line-height:12px;height:12px;color:#f25e5e;">-47.56</div>
<div class="c" style="left:1261.03px;width:60px;text-align:center;top:877.3px;line-height:12px;height:12px;color:#f25e5e;">-0.01</div>
<div class="c" style="left:1261.03px;width:60px;text-align:center;top:920.2px;line-height:12px;height:12px;color:#5f6cf0;">61.84</div>
<div class="c" style="left:1261.03px;width:60px;text-align:center;top:941.0px;line-height:12px;height:12px;color:#f25e5e;">-142.37</div>
<div class="c" style="left:1339.54px;width:60px;text-align:center;top:814.3px;line-height:12px;height:12px;color:#5f6cf0;">4888</div>
<div class="c" style="left:1339.54px;width:60px;text-align:center;top:824.3px;line-height:12px;height:12px;color:#5f6cf0;">5%</div>
<div class="c" style="left:1339.54px;width:60px;text-align:center;top:845.0px;line-height:12px;height:12px;color:#f25e5e;">-50.67</div>
<div class="c" style="left:1339.54px;width:60px;text-align:center;top:877.3px;line-height:12px;height:12px;color:#f25e5e;">-0.02</div>
<div class="c" style="left:1339.54px;width:60px;text-align:center;top:920.2px;line-height:12px;height:12px;color:#5f6cf0;">78.46</div>
<div class="c" style="left:1339.54px;width:60px;text-align:center;top:941.0px;line-height:12px;height:12px;color:#f25e5e;">-372.15</div>
<div class="c" style="left:1418.05px;width:60px;text-align:center;top:792.0px;line-height:12px;height:12px;color:#f25e5e;">-5%</div>
<div class="c" style="left:1418.05px;width:60px;text-align:center;top:802.8px;line-height:12px;height:12px;color:#f25e5e;">-5792</div>
<div class="c" style="left:1418.05px;width:60px;text-align:center;top:845.0px;line-height:12px;height:12px;color:#f25e5e;">-56.54</div>
<div class="c" style="left:1418.05px;width:60px;text-align:center;top:877.3px;line-height:12px;height:12px;color:#f25e5e;">-0.04</div>
<div class="c" style="left:1418.05px;width:60px;text-align:center;top:920.2px;line-height:12px;height:12px;color:#5f6cf0;">101.68</div>
<div class="c" style="left:1418.05px;width:60px;text-align:center;top:941.0px;line-height:12px;height:12px;color:#f25e5e;">-617.67</div>
<div class="c" style="left:1496.56px;width:60px;text-align:center;top:792.0px;line-height:12px;height:12px;color:#f25e5e;">-17%</div>
<div class="c" style="left:1496.56px;width:60px;text-align:center;top:802.8px;line-height:12px;height:12px;color:#f25e5e;">-17859</div>
<div class="c" style="left:1496.56px;width:60px;text-align:center;top:845.0px;line-height:12px;height:12px;color:#f25e5e;">-64.35</div>
<div class="c" style="left:1496.56px;width:60px;text-align:center;top:877.3px;line-height:12px;height:12px;color:#f25e5e;">-0.04</div>
<div class="c" style="left:1496.56px;width:60px;text-align:center;top:920.2px;line-height:12px;height:12px;color:#5f6cf0;">121.95</div>
<div class="c" style="left:1496.56px;width:60px;text-align:center;top:941.0px;line-height:12px;height:12px;color:#f25e5e;">-793.54</div>
<div class="c" style="left:1575.07px;width:60px;text-align:center;top:792.0px;line-height:12px;height:12px;color:#f25e5e;">-29%</div>
<div class="c" style="left:1575.07px;width:60px;text-align:center;top:802.8px;line-height:12px;height:12px;color:#f25e5e;">-31578</div>
<div class="c" style="left:1575.07px;width:60px;text-align:center;top:845.0px;line-height:12px;height:12px;color:#f25e5e;">-72.83</div>
<div class="c" style="left:1575.07px;width:60px;text-align:center;top:877.3px;line-height:12px;height:12px;color:#f25e5e;">-0.04</div>
<div class="c" style="left:1575.07px;width:60px;text-align:center;top:920.2px;line-height:12px;height:12px;color:#5f6cf0;">132.91</div>
<div class="c" style="left:1575.07px;width:60px;text-align:center;top:941.0px;line-height:12px;height:12px;color:#f25e5e;">-852.35</div>
<div class="c" style="left:1653.5800000000002px;width:60px;text-align:center;top:792.0px;line-height:12px;height:12px;color:#f25e5e;">-44%</div>
<div class="c" style="left:1653.5800000000002px;width:60px;text-align:center;top:802.8px;line-height:12px;height:12px;color:#f25e5e;">-46952</div>
<div class="c" style="left:1653.5800000000002px;width:60px;text-align:center;top:845.0px;line-height:12px;height:12px;color:#f25e5e;">-80.73</div>
<div class="c" style="left:1653.5800000000002px;width:60px;text-align:center;top:877.3px;line-height:12px;height:12px;color:#f25e5e;">-0.04</div>
<div class="c" style="left:1653.5800000000002px;width:60px;text-align:center;top:920.2px;line-height:12px;height:12px;color:#5f6cf0;">133.11</div>
<div class="c" style="left:1653.5800000000002px;width:60px;text-align:center;top:941.0px;line-height:12px;height:12px;color:#f25e5e;">-796.01</div>
<div class="c" style="left:1732.09px;width:60px;text-align:center;top:792.0px;line-height:12px;height:12px;color:#f25e5e;">-59%</div>
<div class="c" style="left:1732.09px;width:60px;text-align:center;top:802.8px;line-height:12px;height:12px;color:#f25e5e;">-63778</div>
<div class="c" style="left:1732.09px;width:60px;text-align:center;top:845.0px;line-height:12px;height:12px;color:#f25e5e;">-87.27</div>
<div class="c" style="left:1732.09px;width:60px;text-align:center;top:877.3px;line-height:12px;height:12px;color:#f25e5e;">-0.03</div>
<div class="c" style="left:1732.09px;width:60px;text-align:center;top:920.2px;line-height:12px;height:12px;color:#5f6cf0;">125.06</div>
<div class="c" style="left:1732.09px;width:60px;text-align:center;top:941.0px;line-height:12px;height:12px;color:#f25e5e;">-661.77</div>
<div class="c" style="left:1811.0px;width:60px;text-align:center;top:792.0px;line-height:12px;height:12px;color:#f25e5e;">-76%</div>
<div class="c" style="left:1811.0px;width:60px;text-align:center;top:802.8px;line-height:12px;height:12px;color:#f25e5e;">-81746</div>
<div class="c" style="left:1811.0px;width:60px;text-align:center;top:845.0px;line-height:12px;height:12px;color:#f25e5e;">-92.13</div>
<div class="c" style="left:1811.0px;width:60px;text-align:center;top:877.3px;line-height:12px;height:12px;color:#f25e5e;">-0.02</div>
<div class="c" style="left:1811.0px;width:60px;text-align:center;top:920.2px;line-height:12px;height:12px;color:#5f6cf0;">112.94</div>
<div class="c" style="left:1811.0px;width:60px;text-align:center;top:941.0px;line-height:12px;height:12px;color:#f25e5e;">-497.70</div>
<div style="left:1393px;top:769px;width:50px;height:200.5px;background:rgba(232,238,248,0.9);border:1px solid #4d5d78;border-radius:6px;"></div>
<div class="c" style="left:1388.5px;width:60px;text-align:center;top:770.5px;line-height:13px;height:13px;color:#222;">6528.52</div>
<div class="c" style="left:1388.5px;width:60px;text-align:center;top:803.5px;line-height:13px;height:13px;color:#ff0000;">-1,837</div>
<div class="c" style="left:1388.5px;width:60px;text-align:center;top:818.9px;line-height:13px;height:13px;color:#ff0000;">-1.7%</div>
<div class="c" style="left:1388.5px;width:60px;text-align:center;top:850.9px;line-height:13px;height:13px;color:#ff0000;">-54.16</div>
<div class="c" style="left:1388.5px;width:60px;text-align:center;top:882.5px;line-height:13px;height:13px;color:#ff0000;">-0.03</div>
<div class="c" style="left:1388.5px;width:60px;text-align:center;top:914.5px;line-height:13px;height:13px;color:#0000ff;">93.26</div>
<div class="c" style="left:1388.5px;width:60px;text-align:center;top:946.7px;line-height:13px;height:13px;color:#ff0000;">-534.02</div>
</body></html>
